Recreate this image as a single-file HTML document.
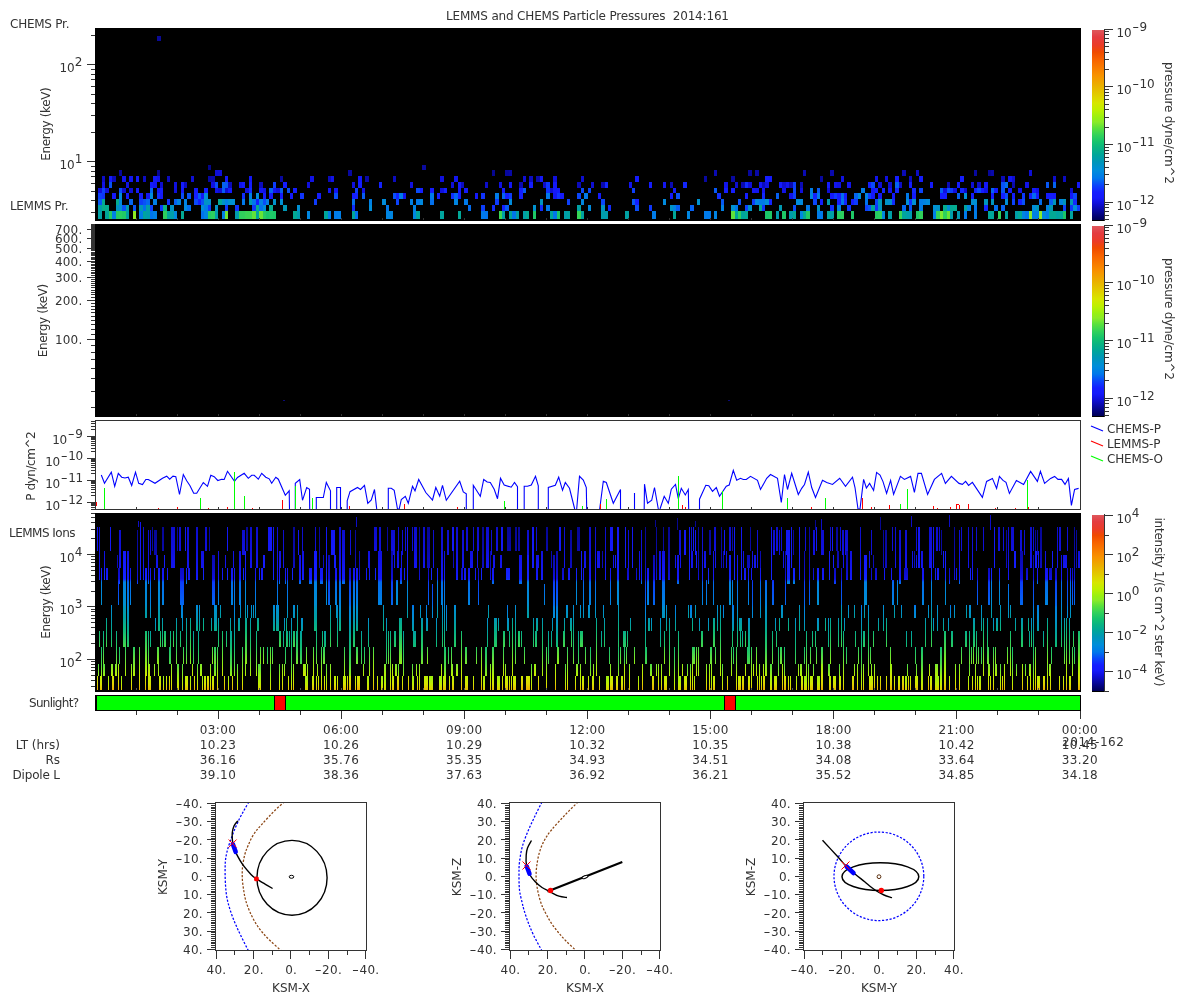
<!DOCTYPE html>
<html><head><meta charset="utf-8"><title>LEMMS and CHEMS Particle Pressures</title>
<style>html,body{margin:0;padding:0;background:#fff}svg{display:block;will-change:transform}text{font-family:'DejaVu Sans','Liberation Sans',sans-serif;font-size:12px;fill:#333}.fg{fill:#333}</style></head><body>
<svg width="1200" height="1000" viewBox="0 0 1200 1000">
<rect width="1200" height="1000" fill="#fff"/>
<defs>
<linearGradient id="cb1" gradientUnits="userSpaceOnUse" x1="0" y1="220" x2="0" y2="30"><stop offset="0.0000" stop-color="#000055"/><stop offset="0.0105" stop-color="#000064"/><stop offset="0.0370" stop-color="#05058c"/><stop offset="0.0630" stop-color="#0a0ab4"/><stop offset="0.0890" stop-color="#0f0fdc"/><stop offset="0.1160" stop-color="#1419fa"/><stop offset="0.1470" stop-color="#141eff"/><stop offset="0.1840" stop-color="#0a46fa"/><stop offset="0.2210" stop-color="#0078eb"/><stop offset="0.2630" stop-color="#008eda"/><stop offset="0.3050" stop-color="#0096b9"/><stop offset="0.3420" stop-color="#00a59b"/><stop offset="0.3790" stop-color="#0ab482"/><stop offset="0.4100" stop-color="#14c36e"/><stop offset="0.4470" stop-color="#32d25a"/><stop offset="0.4840" stop-color="#5ae13c"/><stop offset="0.5160" stop-color="#8ceb28"/><stop offset="0.5370" stop-color="#96f014"/><stop offset="0.5790" stop-color="#bef000"/><stop offset="0.6160" stop-color="#d7e600"/><stop offset="0.6580" stop-color="#e1cd00"/><stop offset="0.7100" stop-color="#ebaf00"/><stop offset="0.7630" stop-color="#f89100"/><stop offset="0.8420" stop-color="#f86400"/><stop offset="0.8840" stop-color="#f04b00"/><stop offset="0.9200" stop-color="#eb3c28"/><stop offset="0.9630" stop-color="#e43c41"/><stop offset="1.0000" stop-color="#de585c"/></linearGradient>
<linearGradient id="cb2" gradientUnits="userSpaceOnUse" x1="0" y1="416" x2="0" y2="226"><stop offset="0.0000" stop-color="#000055"/><stop offset="0.0105" stop-color="#000064"/><stop offset="0.0370" stop-color="#05058c"/><stop offset="0.0630" stop-color="#0a0ab4"/><stop offset="0.0890" stop-color="#0f0fdc"/><stop offset="0.1160" stop-color="#1419fa"/><stop offset="0.1470" stop-color="#141eff"/><stop offset="0.1840" stop-color="#0a46fa"/><stop offset="0.2210" stop-color="#0078eb"/><stop offset="0.2630" stop-color="#008eda"/><stop offset="0.3050" stop-color="#0096b9"/><stop offset="0.3420" stop-color="#00a59b"/><stop offset="0.3790" stop-color="#0ab482"/><stop offset="0.4100" stop-color="#14c36e"/><stop offset="0.4470" stop-color="#32d25a"/><stop offset="0.4840" stop-color="#5ae13c"/><stop offset="0.5160" stop-color="#8ceb28"/><stop offset="0.5370" stop-color="#96f014"/><stop offset="0.5790" stop-color="#bef000"/><stop offset="0.6160" stop-color="#d7e600"/><stop offset="0.6580" stop-color="#e1cd00"/><stop offset="0.7100" stop-color="#ebaf00"/><stop offset="0.7630" stop-color="#f89100"/><stop offset="0.8420" stop-color="#f86400"/><stop offset="0.8840" stop-color="#f04b00"/><stop offset="0.9200" stop-color="#eb3c28"/><stop offset="0.9630" stop-color="#e43c41"/><stop offset="1.0000" stop-color="#de585c"/></linearGradient>
<linearGradient id="cb3" gradientUnits="userSpaceOnUse" x1="0" y1="691" x2="0" y2="515"><stop offset="0.0000" stop-color="#000055"/><stop offset="0.0105" stop-color="#000064"/><stop offset="0.0370" stop-color="#05058c"/><stop offset="0.0630" stop-color="#0a0ab4"/><stop offset="0.0890" stop-color="#0f0fdc"/><stop offset="0.1160" stop-color="#1419fa"/><stop offset="0.1470" stop-color="#141eff"/><stop offset="0.1840" stop-color="#0a46fa"/><stop offset="0.2210" stop-color="#0078eb"/><stop offset="0.2630" stop-color="#008eda"/><stop offset="0.3050" stop-color="#0096b9"/><stop offset="0.3420" stop-color="#00a59b"/><stop offset="0.3790" stop-color="#0ab482"/><stop offset="0.4100" stop-color="#14c36e"/><stop offset="0.4470" stop-color="#32d25a"/><stop offset="0.4840" stop-color="#5ae13c"/><stop offset="0.5160" stop-color="#8ceb28"/><stop offset="0.5370" stop-color="#96f014"/><stop offset="0.5790" stop-color="#bef000"/><stop offset="0.6160" stop-color="#d7e600"/><stop offset="0.6580" stop-color="#e1cd00"/><stop offset="0.7100" stop-color="#ebaf00"/><stop offset="0.7630" stop-color="#f89100"/><stop offset="0.8420" stop-color="#f86400"/><stop offset="0.8840" stop-color="#f04b00"/><stop offset="0.9200" stop-color="#eb3c28"/><stop offset="0.9630" stop-color="#e43c41"/><stop offset="1.0000" stop-color="#de585c"/></linearGradient>
<linearGradient id="g4" gradientUnits="userSpaceOnUse" x1="0" y1="513" x2="0" y2="690"><stop offset="0.0000" stop-color="#0b0bbf"/><stop offset="0.0791" stop-color="#0d0dcb"/><stop offset="0.2147" stop-color="#1010df"/><stop offset="0.3107" stop-color="#1316f1"/><stop offset="0.3729" stop-color="#141afb"/><stop offset="0.3898" stop-color="#0369ef"/><stop offset="0.5198" stop-color="#0085e1"/><stop offset="0.5311" stop-color="#008fd4"/><stop offset="0.5932" stop-color="#0096b9"/><stop offset="0.6667" stop-color="#06ae8b"/><stop offset="0.7571" stop-color="#28cd60"/><stop offset="0.8531" stop-color="#7be82f"/><stop offset="0.9209" stop-color="#baf002"/><stop offset="0.9661" stop-color="#d8e400"/><stop offset="1.0000" stop-color="#e7bb00"/></linearGradient>
<linearGradient id="g4a" gradientUnits="userSpaceOnUse" x1="0" y1="513" x2="0" y2="690"><stop offset="0.0000" stop-color="#050589"/><stop offset="0.0791" stop-color="#060695"/><stop offset="0.2147" stop-color="#0909ab"/><stop offset="0.3107" stop-color="#0c0cc3"/><stop offset="0.3729" stop-color="#0f0fdd"/><stop offset="0.3898" stop-color="#0c3cfb"/><stop offset="0.5198" stop-color="#0369ef"/><stop offset="0.5311" stop-color="#007fe5"/><stop offset="0.5932" stop-color="#008fd4"/><stop offset="0.6667" stop-color="#00a0a5"/><stop offset="0.7571" stop-color="#11be74"/><stop offset="0.8531" stop-color="#4bdb47"/><stop offset="0.9209" stop-color="#99f013"/><stop offset="0.9661" stop-color="#c2ee00"/><stop offset="1.0000" stop-color="#e0cf00"/></linearGradient>
<linearGradient id="g4b" gradientUnits="userSpaceOnUse" x1="0" y1="513" x2="0" y2="690"><stop offset="0.0000" stop-color="#1113e8"/><stop offset="0.0791" stop-color="#1316f1"/><stop offset="0.2147" stop-color="#141afb"/><stop offset="0.3107" stop-color="#141dfe"/><stop offset="0.3729" stop-color="#1227fe"/><stop offset="0.3898" stop-color="#0082e3"/><stop offset="0.5198" stop-color="#0090d1"/><stop offset="0.5311" stop-color="#0095bd"/><stop offset="0.5932" stop-color="#00a2a1"/><stop offset="0.6667" stop-color="#0fbc78"/><stop offset="0.7571" stop-color="#45d94b"/><stop offset="0.8531" stop-color="#95f016"/><stop offset="0.9209" stop-color="#d0e900"/><stop offset="0.9661" stop-color="#dfd200"/><stop offset="1.0000" stop-color="#eda900"/></linearGradient>
</defs>
<g shape-rendering="crispEdges">
<rect x="95" y="28" width="986" height="193" fill="#000"/>
<rect x="98" y="211" width="4" height="8" fill="#00a1a3"/>
<rect x="98" y="205" width="4" height="6" fill="#009fa7"/>
<rect x="98" y="199" width="4" height="6" fill="#0658f5"/>
<rect x="98" y="193" width="4" height="6" fill="#0b40fb"/>
<rect x="98" y="188" width="4" height="5" fill="#0f0fdd"/>
<rect x="102" y="205" width="3" height="6" fill="#07af8a"/>
<rect x="102" y="199" width="3" height="6" fill="#03aa93"/>
<rect x="102" y="193" width="3" height="6" fill="#0e34fc"/>
<rect x="102" y="188" width="3" height="5" fill="#0a44fa"/>
<rect x="102" y="182" width="3" height="6" fill="#1112e5"/>
<rect x="102" y="176" width="3" height="6" fill="#0c0cc7"/>
<rect x="105" y="211" width="4" height="8" fill="#01a699"/>
<rect x="105" y="205" width="4" height="6" fill="#05ad8e"/>
<rect x="105" y="188" width="4" height="5" fill="#0f0fd9"/>
<rect x="109" y="211" width="3" height="8" fill="#21ca65"/>
<rect x="109" y="182" width="3" height="6" fill="#0852f6"/>
<rect x="109" y="176" width="3" height="6" fill="#141cfd"/>
<rect x="112" y="211" width="4" height="8" fill="#0081e4"/>
<rect x="112" y="193" width="4" height="6" fill="#1419f9"/>
<rect x="112" y="176" width="4" height="6" fill="#0a0ab7"/>
<rect x="116" y="211" width="3" height="8" fill="#24cb63"/>
<rect x="116" y="205" width="3" height="6" fill="#0094c1"/>
<rect x="116" y="199" width="3" height="6" fill="#04ac90"/>
<rect x="119" y="211" width="3" height="8" fill="#29ce60"/>
<rect x="119" y="205" width="3" height="6" fill="#0090d3"/>
<rect x="119" y="199" width="3" height="6" fill="#0089de"/>
<rect x="119" y="193" width="3" height="6" fill="#008cdc"/>
<rect x="119" y="188" width="3" height="5" fill="#0851f7"/>
<rect x="119" y="170" width="3" height="6" fill="#060697"/>
<rect x="122" y="211" width="4" height="8" fill="#21ca65"/>
<rect x="122" y="205" width="4" height="6" fill="#0852f6"/>
<rect x="122" y="188" width="4" height="5" fill="#0d0dce"/>
<rect x="122" y="176" width="4" height="6" fill="#1215ef"/>
<rect x="126" y="211" width="3" height="8" fill="#00a2a1"/>
<rect x="126" y="205" width="3" height="6" fill="#009baf"/>
<rect x="126" y="193" width="3" height="6" fill="#141afb"/>
<rect x="126" y="182" width="3" height="6" fill="#1012e4"/>
<rect x="129" y="199" width="4" height="6" fill="#0465f1"/>
<rect x="129" y="188" width="4" height="5" fill="#0e0ed5"/>
<rect x="129" y="176" width="4" height="6" fill="#1216f1"/>
<rect x="133" y="211" width="3" height="8" fill="#8eec23"/>
<rect x="133" y="205" width="3" height="6" fill="#0753f6"/>
<rect x="136" y="188" width="3" height="5" fill="#141afb"/>
<rect x="136" y="176" width="3" height="6" fill="#141afb"/>
<rect x="139" y="211" width="4" height="8" fill="#007ee6"/>
<rect x="139" y="205" width="4" height="6" fill="#0096bb"/>
<rect x="139" y="199" width="4" height="6" fill="#0c3efb"/>
<rect x="139" y="193" width="4" height="6" fill="#141dfe"/>
<rect x="143" y="211" width="3" height="8" fill="#00a49d"/>
<rect x="143" y="205" width="3" height="6" fill="#0171ed"/>
<rect x="143" y="199" width="3" height="6" fill="#0852f6"/>
<rect x="143" y="176" width="3" height="6" fill="#0c0cc1"/>
<rect x="146" y="211" width="4" height="8" fill="#009dab"/>
<rect x="146" y="205" width="4" height="6" fill="#009ea9"/>
<rect x="146" y="199" width="4" height="6" fill="#0368f0"/>
<rect x="146" y="193" width="4" height="6" fill="#1316f2"/>
<rect x="150" y="211" width="3" height="8" fill="#0175ec"/>
<rect x="150" y="205" width="3" height="6" fill="#0c3ffb"/>
<rect x="150" y="193" width="3" height="6" fill="#008ed9"/>
<rect x="150" y="188" width="3" height="5" fill="#0369f0"/>
<rect x="150" y="182" width="3" height="6" fill="#141bfc"/>
<rect x="153" y="211" width="4" height="8" fill="#0080e5"/>
<rect x="153" y="199" width="4" height="6" fill="#007fe6"/>
<rect x="153" y="182" width="4" height="6" fill="#1316f2"/>
<rect x="153" y="176" width="4" height="6" fill="#1318f7"/>
<rect x="157" y="193" width="3" height="6" fill="#102efd"/>
<rect x="157" y="188" width="3" height="5" fill="#1418f7"/>
<rect x="157" y="176" width="3" height="6" fill="#1113e9"/>
<rect x="157" y="170" width="3" height="6" fill="#060695"/>
<rect x="160" y="205" width="3" height="6" fill="#0d39fc"/>
<rect x="160" y="193" width="3" height="6" fill="#141afb"/>
<rect x="160" y="188" width="3" height="5" fill="#141dfe"/>
<rect x="160" y="182" width="3" height="6" fill="#0d0dcf"/>
<rect x="163" y="211" width="4" height="8" fill="#2dcf5d"/>
<rect x="163" y="205" width="4" height="6" fill="#0ab483"/>
<rect x="167" y="211" width="3" height="8" fill="#01a699"/>
<rect x="167" y="199" width="3" height="6" fill="#0f31fd"/>
<rect x="167" y="176" width="3" height="6" fill="#0b0bbc"/>
<rect x="170" y="211" width="4" height="8" fill="#009eaa"/>
<rect x="170" y="205" width="4" height="6" fill="#0093c5"/>
<rect x="174" y="211" width="3" height="8" fill="#0088df"/>
<rect x="174" y="199" width="3" height="6" fill="#0561f2"/>
<rect x="174" y="188" width="3" height="5" fill="#0f0fdb"/>
<rect x="174" y="182" width="3" height="6" fill="#1010df"/>
<rect x="177" y="199" width="4" height="6" fill="#0084e2"/>
<rect x="181" y="211" width="3" height="8" fill="#03a994"/>
<rect x="181" y="193" width="3" height="6" fill="#084ef7"/>
<rect x="181" y="188" width="3" height="5" fill="#141bfc"/>
<rect x="181" y="182" width="3" height="6" fill="#141cfd"/>
<rect x="184" y="205" width="3" height="6" fill="#008add"/>
<rect x="184" y="199" width="3" height="6" fill="#0083e3"/>
<rect x="184" y="182" width="3" height="6" fill="#0b0bbf"/>
<rect x="187" y="205" width="4" height="6" fill="#0270ed"/>
<rect x="187" y="193" width="4" height="6" fill="#0754f6"/>
<rect x="191" y="176" width="3" height="6" fill="#0e0ed5"/>
<rect x="194" y="199" width="4" height="6" fill="#0949f9"/>
<rect x="194" y="193" width="4" height="6" fill="#141fff"/>
<rect x="194" y="188" width="4" height="5" fill="#141afb"/>
<rect x="198" y="199" width="3" height="6" fill="#141dfe"/>
<rect x="198" y="193" width="3" height="6" fill="#055df3"/>
<rect x="201" y="211" width="3" height="8" fill="#0172ed"/>
<rect x="201" y="205" width="3" height="6" fill="#008ed8"/>
<rect x="201" y="199" width="3" height="6" fill="#0852f6"/>
<rect x="201" y="193" width="3" height="6" fill="#1317f5"/>
<rect x="204" y="211" width="4" height="8" fill="#0086e1"/>
<rect x="204" y="205" width="4" height="6" fill="#007ce8"/>
<rect x="204" y="199" width="4" height="6" fill="#0093c4"/>
<rect x="204" y="193" width="4" height="6" fill="#008ed9"/>
<rect x="204" y="188" width="4" height="5" fill="#141eff"/>
<rect x="208" y="211" width="3" height="8" fill="#24cb63"/>
<rect x="208" y="205" width="3" height="6" fill="#0d3bfb"/>
<rect x="208" y="199" width="3" height="6" fill="#0091ce"/>
<rect x="208" y="176" width="3" height="6" fill="#0808a4"/>
<rect x="208" y="165" width="3" height="5" fill="#05058c"/>
<rect x="211" y="211" width="4" height="8" fill="#2dcf5e"/>
<rect x="211" y="182" width="4" height="6" fill="#1011e1"/>
<rect x="211" y="176" width="4" height="6" fill="#0909aa"/>
<rect x="215" y="211" width="3" height="8" fill="#009ea9"/>
<rect x="215" y="205" width="3" height="6" fill="#0093c6"/>
<rect x="215" y="188" width="3" height="5" fill="#1112e6"/>
<rect x="215" y="182" width="3" height="6" fill="#094df8"/>
<rect x="215" y="170" width="3" height="6" fill="#0e0ed7"/>
<rect x="218" y="199" width="4" height="6" fill="#02a895"/>
<rect x="218" y="188" width="4" height="5" fill="#0e0ed1"/>
<rect x="218" y="170" width="4" height="6" fill="#0f0fd9"/>
<rect x="222" y="211" width="3" height="8" fill="#0080e5"/>
<rect x="222" y="199" width="3" height="6" fill="#0093c6"/>
<rect x="222" y="188" width="3" height="5" fill="#065bf4"/>
<rect x="222" y="182" width="3" height="6" fill="#0463f1"/>
<rect x="225" y="211" width="3" height="8" fill="#70e533"/>
<rect x="225" y="205" width="3" height="6" fill="#0e37fc"/>
<rect x="225" y="199" width="3" height="6" fill="#0081e4"/>
<rect x="225" y="188" width="3" height="5" fill="#0d0dd0"/>
<rect x="225" y="182" width="3" height="6" fill="#065af4"/>
<rect x="225" y="176" width="3" height="6" fill="#1419fa"/>
<rect x="228" y="199" width="4" height="6" fill="#0091cf"/>
<rect x="228" y="188" width="4" height="5" fill="#141bfc"/>
<rect x="228" y="182" width="4" height="6" fill="#0b0bbb"/>
<rect x="232" y="199" width="3" height="6" fill="#008fd8"/>
<rect x="235" y="211" width="4" height="8" fill="#009cad"/>
<rect x="235" y="205" width="4" height="6" fill="#0f31fd"/>
<rect x="239" y="211" width="3" height="8" fill="#2fd15c"/>
<rect x="239" y="182" width="3" height="6" fill="#1114eb"/>
<rect x="242" y="211" width="3" height="8" fill="#31d15b"/>
<rect x="242" y="199" width="3" height="6" fill="#0079ea"/>
<rect x="242" y="193" width="3" height="6" fill="#102efd"/>
<rect x="242" y="182" width="3" height="6" fill="#141afb"/>
<rect x="245" y="211" width="4" height="8" fill="#3ad554"/>
<rect x="245" y="188" width="4" height="5" fill="#0f10de"/>
<rect x="249" y="211" width="3" height="8" fill="#3bd554"/>
<rect x="249" y="199" width="3" height="6" fill="#0098b4"/>
<rect x="249" y="193" width="3" height="6" fill="#007fe5"/>
<rect x="249" y="188" width="3" height="5" fill="#102efd"/>
<rect x="249" y="182" width="3" height="6" fill="#141eff"/>
<rect x="249" y="176" width="3" height="6" fill="#1317f5"/>
<rect x="252" y="211" width="4" height="8" fill="#60e23a"/>
<rect x="252" y="205" width="4" height="6" fill="#0e35fc"/>
<rect x="252" y="199" width="4" height="6" fill="#0076ec"/>
<rect x="256" y="211" width="3" height="8" fill="#00a59b"/>
<rect x="256" y="205" width="3" height="6" fill="#05ac8f"/>
<rect x="256" y="199" width="3" height="6" fill="#141dfe"/>
<rect x="256" y="193" width="3" height="6" fill="#008ddb"/>
<rect x="259" y="211" width="4" height="8" fill="#68e436"/>
<rect x="259" y="205" width="4" height="6" fill="#0173ec"/>
<rect x="259" y="199" width="4" height="6" fill="#0082e3"/>
<rect x="259" y="188" width="4" height="5" fill="#1216f0"/>
<rect x="259" y="182" width="4" height="6" fill="#0b0bbe"/>
<rect x="263" y="211" width="3" height="8" fill="#27cc61"/>
<rect x="263" y="205" width="3" height="6" fill="#008eda"/>
<rect x="263" y="199" width="3" height="6" fill="#094df8"/>
<rect x="263" y="193" width="3" height="6" fill="#141bfc"/>
<rect x="263" y="188" width="3" height="5" fill="#1012e4"/>
<rect x="266" y="211" width="3" height="8" fill="#1ac66a"/>
<rect x="266" y="199" width="3" height="6" fill="#0080e5"/>
<rect x="269" y="211" width="4" height="8" fill="#1fc967"/>
<rect x="269" y="205" width="4" height="6" fill="#05ad8e"/>
<rect x="269" y="193" width="4" height="6" fill="#141cfd"/>
<rect x="269" y="188" width="4" height="5" fill="#0463f1"/>
<rect x="273" y="211" width="3" height="8" fill="#1cc768"/>
<rect x="273" y="199" width="3" height="6" fill="#0092c9"/>
<rect x="273" y="188" width="3" height="5" fill="#1216f0"/>
<rect x="273" y="182" width="3" height="6" fill="#0c3cfb"/>
<rect x="276" y="188" width="4" height="5" fill="#0f0fd9"/>
<rect x="280" y="199" width="3" height="6" fill="#0090d3"/>
<rect x="280" y="193" width="3" height="6" fill="#141dfe"/>
<rect x="280" y="188" width="3" height="5" fill="#055ef3"/>
<rect x="280" y="176" width="3" height="6" fill="#0808a1"/>
<rect x="283" y="205" width="4" height="6" fill="#0098b6"/>
<rect x="283" y="182" width="4" height="6" fill="#141cfd"/>
<rect x="287" y="188" width="3" height="5" fill="#0850f7"/>
<rect x="290" y="193" width="3" height="6" fill="#141afb"/>
<rect x="293" y="211" width="4" height="8" fill="#03a994"/>
<rect x="293" y="188" width="4" height="5" fill="#141cfd"/>
<rect x="297" y="211" width="3" height="8" fill="#009cad"/>
<rect x="297" y="205" width="3" height="6" fill="#0090d3"/>
<rect x="300" y="193" width="4" height="6" fill="#0f34fc"/>
<rect x="307" y="211" width="3" height="8" fill="#0086e0"/>
<rect x="307" y="182" width="3" height="6" fill="#0f0fdd"/>
<rect x="310" y="176" width="4" height="6" fill="#1012e5"/>
<rect x="314" y="199" width="3" height="6" fill="#0d3bfb"/>
<rect x="317" y="193" width="4" height="6" fill="#141dfe"/>
<rect x="324" y="211" width="4" height="8" fill="#00a69a"/>
<rect x="328" y="211" width="3" height="8" fill="#007ee7"/>
<rect x="328" y="188" width="3" height="5" fill="#1216f0"/>
<rect x="328" y="176" width="3" height="6" fill="#0b0bb9"/>
<rect x="331" y="176" width="3" height="6" fill="#1113e8"/>
<rect x="334" y="211" width="4" height="8" fill="#007be8"/>
<rect x="334" y="193" width="4" height="6" fill="#094df8"/>
<rect x="334" y="188" width="4" height="5" fill="#1316f2"/>
<rect x="338" y="211" width="3" height="8" fill="#007ee7"/>
<rect x="348" y="170" width="4" height="6" fill="#0808a2"/>
<rect x="352" y="211" width="3" height="8" fill="#01a699"/>
<rect x="352" y="205" width="3" height="6" fill="#112bfd"/>
<rect x="352" y="199" width="3" height="6" fill="#026eee"/>
<rect x="352" y="193" width="3" height="6" fill="#141cfd"/>
<rect x="352" y="182" width="3" height="6" fill="#0f10de"/>
<rect x="355" y="211" width="3" height="8" fill="#0174ec"/>
<rect x="355" y="193" width="3" height="6" fill="#1322fe"/>
<rect x="355" y="188" width="3" height="5" fill="#0d3cfb"/>
<rect x="358" y="182" width="4" height="6" fill="#141eff"/>
<rect x="358" y="176" width="4" height="6" fill="#1419fa"/>
<rect x="362" y="193" width="3" height="6" fill="#065cf3"/>
<rect x="362" y="188" width="3" height="5" fill="#1012e5"/>
<rect x="365" y="176" width="4" height="6" fill="#0808a5"/>
<rect x="369" y="205" width="3" height="6" fill="#008eda"/>
<rect x="369" y="199" width="3" height="6" fill="#0080e5"/>
<rect x="379" y="182" width="3" height="6" fill="#1322fe"/>
<rect x="382" y="199" width="4" height="6" fill="#008cdb"/>
<rect x="386" y="211" width="3" height="8" fill="#0085e1"/>
<rect x="386" y="205" width="3" height="6" fill="#0078eb"/>
<rect x="389" y="211" width="4" height="8" fill="#0085e1"/>
<rect x="393" y="193" width="3" height="6" fill="#0851f7"/>
<rect x="393" y="176" width="3" height="6" fill="#0b0bbf"/>
<rect x="396" y="199" width="3" height="6" fill="#0b42fb"/>
<rect x="396" y="193" width="3" height="6" fill="#1323fe"/>
<rect x="399" y="193" width="4" height="6" fill="#007ce8"/>
<rect x="403" y="193" width="3" height="6" fill="#1113e9"/>
<rect x="410" y="199" width="3" height="6" fill="#007fe6"/>
<rect x="410" y="182" width="3" height="6" fill="#1011e1"/>
<rect x="413" y="211" width="3" height="8" fill="#0086e0"/>
<rect x="413" y="205" width="3" height="6" fill="#0081e4"/>
<rect x="416" y="211" width="4" height="8" fill="#00a39f"/>
<rect x="416" y="199" width="4" height="6" fill="#0079ea"/>
<rect x="416" y="188" width="4" height="5" fill="#094bf9"/>
<rect x="420" y="199" width="3" height="6" fill="#0088de"/>
<rect x="420" y="188" width="3" height="5" fill="#141fff"/>
<rect x="430" y="199" width="4" height="6" fill="#0270ed"/>
<rect x="430" y="193" width="4" height="6" fill="#007be9"/>
<rect x="430" y="188" width="4" height="5" fill="#141cfd"/>
<rect x="437" y="193" width="3" height="6" fill="#141dfe"/>
<rect x="440" y="211" width="4" height="8" fill="#00a49e"/>
<rect x="440" y="188" width="4" height="5" fill="#0f10de"/>
<rect x="440" y="176" width="4" height="6" fill="#0f10df"/>
<rect x="444" y="188" width="3" height="5" fill="#1321ff"/>
<rect x="451" y="193" width="3" height="6" fill="#1030fd"/>
<rect x="451" y="182" width="3" height="6" fill="#0e0ed7"/>
<rect x="454" y="199" width="4" height="6" fill="#0085e1"/>
<rect x="454" y="193" width="4" height="6" fill="#0465f1"/>
<rect x="454" y="176" width="4" height="6" fill="#1215ef"/>
<rect x="458" y="211" width="3" height="8" fill="#02a797"/>
<rect x="458" y="193" width="3" height="6" fill="#141cfd"/>
<rect x="458" y="188" width="3" height="5" fill="#1419fa"/>
<rect x="458" y="182" width="3" height="6" fill="#141cfd"/>
<rect x="461" y="182" width="3" height="6" fill="#0c0cc1"/>
<rect x="464" y="199" width="4" height="6" fill="#007aea"/>
<rect x="464" y="188" width="4" height="5" fill="#1419f9"/>
<rect x="468" y="205" width="3" height="6" fill="#026cef"/>
<rect x="475" y="193" width="3" height="6" fill="#1419f9"/>
<rect x="481" y="211" width="4" height="8" fill="#0078eb"/>
<rect x="481" y="205" width="4" height="6" fill="#0c3efb"/>
<rect x="481" y="193" width="4" height="6" fill="#0f32fd"/>
<rect x="485" y="211" width="3" height="8" fill="#0174ec"/>
<rect x="485" y="182" width="3" height="6" fill="#0d0dca"/>
<rect x="492" y="205" width="3" height="6" fill="#112bfd"/>
<rect x="492" y="170" width="3" height="6" fill="#060692"/>
<rect x="495" y="199" width="4" height="6" fill="#0d3bfb"/>
<rect x="495" y="193" width="4" height="6" fill="#007be9"/>
<rect x="499" y="211" width="3" height="8" fill="#3ad554"/>
<rect x="499" y="182" width="3" height="6" fill="#1011e2"/>
<rect x="502" y="211" width="3" height="8" fill="#00a0a4"/>
<rect x="502" y="205" width="3" height="6" fill="#1321ff"/>
<rect x="502" y="193" width="3" height="6" fill="#0464f1"/>
<rect x="502" y="188" width="3" height="5" fill="#141bfc"/>
<rect x="505" y="205" width="4" height="6" fill="#065cf3"/>
<rect x="505" y="193" width="4" height="6" fill="#141eff"/>
<rect x="505" y="170" width="4" height="6" fill="#07079f"/>
<rect x="509" y="211" width="3" height="8" fill="#00a39e"/>
<rect x="509" y="199" width="3" height="6" fill="#008bdc"/>
<rect x="509" y="193" width="3" height="6" fill="#0d3bfb"/>
<rect x="509" y="182" width="3" height="6" fill="#1318f7"/>
<rect x="509" y="170" width="3" height="6" fill="#0808a7"/>
<rect x="512" y="211" width="4" height="8" fill="#0076ec"/>
<rect x="516" y="211" width="3" height="8" fill="#009ea8"/>
<rect x="519" y="193" width="4" height="6" fill="#141fff"/>
<rect x="519" y="188" width="4" height="5" fill="#141cfd"/>
<rect x="519" y="182" width="4" height="6" fill="#0a0ab5"/>
<rect x="523" y="211" width="3" height="8" fill="#009fa6"/>
<rect x="523" y="188" width="3" height="5" fill="#0658f5"/>
<rect x="523" y="176" width="3" height="6" fill="#0e0ed3"/>
<rect x="526" y="211" width="3" height="8" fill="#03aa93"/>
<rect x="529" y="182" width="4" height="6" fill="#141dfe"/>
<rect x="529" y="176" width="4" height="6" fill="#0c0cc3"/>
<rect x="533" y="211" width="3" height="8" fill="#1ec868"/>
<rect x="533" y="205" width="3" height="6" fill="#0091ce"/>
<rect x="536" y="176" width="4" height="6" fill="#0909ab"/>
<rect x="540" y="205" width="3" height="6" fill="#102cfd"/>
<rect x="540" y="199" width="3" height="6" fill="#0094c1"/>
<rect x="540" y="176" width="3" height="6" fill="#1418f8"/>
<rect x="543" y="182" width="3" height="6" fill="#0d0dcb"/>
<rect x="546" y="205" width="4" height="6" fill="#0078eb"/>
<rect x="546" y="193" width="4" height="6" fill="#007aea"/>
<rect x="546" y="188" width="4" height="5" fill="#0f33fc"/>
<rect x="546" y="182" width="4" height="6" fill="#0e36fc"/>
<rect x="550" y="211" width="3" height="8" fill="#00a59b"/>
<rect x="550" y="188" width="3" height="5" fill="#0e0ed1"/>
<rect x="553" y="211" width="4" height="8" fill="#0077eb"/>
<rect x="553" y="193" width="4" height="6" fill="#1316f2"/>
<rect x="553" y="188" width="4" height="5" fill="#1419f9"/>
<rect x="553" y="182" width="4" height="6" fill="#1419fa"/>
<rect x="553" y="176" width="4" height="6" fill="#0f0fdb"/>
<rect x="557" y="211" width="3" height="8" fill="#1ac66a"/>
<rect x="557" y="193" width="3" height="6" fill="#0f34fc"/>
<rect x="557" y="188" width="3" height="5" fill="#141bfc"/>
<rect x="560" y="193" width="4" height="6" fill="#141afb"/>
<rect x="564" y="211" width="3" height="8" fill="#009dab"/>
<rect x="567" y="211" width="3" height="8" fill="#00a2a1"/>
<rect x="567" y="199" width="3" height="6" fill="#0c40fb"/>
<rect x="577" y="211" width="4" height="8" fill="#36d457"/>
<rect x="577" y="205" width="4" height="6" fill="#00a1a3"/>
<rect x="577" y="193" width="4" height="6" fill="#0a45fa"/>
<rect x="577" y="182" width="4" height="6" fill="#0b0bbc"/>
<rect x="581" y="211" width="3" height="8" fill="#00a39f"/>
<rect x="581" y="199" width="3" height="6" fill="#0087df"/>
<rect x="581" y="188" width="3" height="5" fill="#0a48f9"/>
<rect x="581" y="176" width="3" height="6" fill="#0d0dd0"/>
<rect x="584" y="193" width="4" height="6" fill="#0079ea"/>
<rect x="588" y="205" width="3" height="6" fill="#0089de"/>
<rect x="588" y="188" width="3" height="5" fill="#0a44fa"/>
<rect x="591" y="182" width="3" height="6" fill="#0e0ed4"/>
<rect x="598" y="193" width="3" height="6" fill="#141bfc"/>
<rect x="601" y="211" width="4" height="8" fill="#009cac"/>
<rect x="601" y="205" width="4" height="6" fill="#0093c5"/>
<rect x="601" y="199" width="4" height="6" fill="#0a46fa"/>
<rect x="601" y="182" width="4" height="6" fill="#0909b0"/>
<rect x="605" y="211" width="3" height="8" fill="#009bae"/>
<rect x="605" y="182" width="3" height="6" fill="#1227fe"/>
<rect x="608" y="205" width="3" height="6" fill="#112bfd"/>
<rect x="625" y="211" width="4" height="8" fill="#00a1a3"/>
<rect x="629" y="182" width="3" height="6" fill="#1215ef"/>
<rect x="632" y="199" width="3" height="6" fill="#065bf4"/>
<rect x="632" y="188" width="3" height="5" fill="#0c3efb"/>
<rect x="635" y="205" width="4" height="6" fill="#094df8"/>
<rect x="635" y="199" width="4" height="6" fill="#141eff"/>
<rect x="635" y="176" width="4" height="6" fill="#141afb"/>
<rect x="649" y="205" width="3" height="6" fill="#0e37fc"/>
<rect x="649" y="182" width="3" height="6" fill="#141cfd"/>
<rect x="652" y="211" width="4" height="8" fill="#007be9"/>
<rect x="663" y="199" width="3" height="6" fill="#008add"/>
<rect x="663" y="182" width="3" height="6" fill="#1316f1"/>
<rect x="670" y="205" width="3" height="6" fill="#0093c5"/>
<rect x="670" y="193" width="3" height="6" fill="#141afb"/>
<rect x="670" y="182" width="3" height="6" fill="#0a0ab4"/>
<rect x="673" y="211" width="3" height="8" fill="#01a699"/>
<rect x="673" y="205" width="3" height="6" fill="#0084e1"/>
<rect x="673" y="188" width="3" height="5" fill="#141afb"/>
<rect x="676" y="205" width="4" height="6" fill="#065cf4"/>
<rect x="676" y="193" width="4" height="6" fill="#0851f7"/>
<rect x="683" y="182" width="4" height="6" fill="#1225fe"/>
<rect x="687" y="211" width="3" height="8" fill="#0086e0"/>
<rect x="690" y="205" width="4" height="6" fill="#0561f2"/>
<rect x="697" y="199" width="3" height="6" fill="#0091ce"/>
<rect x="704" y="211" width="3" height="8" fill="#007be9"/>
<rect x="704" y="176" width="3" height="6" fill="#0808a1"/>
<rect x="707" y="211" width="4" height="8" fill="#007aea"/>
<rect x="714" y="211" width="3" height="8" fill="#0083e2"/>
<rect x="714" y="188" width="3" height="5" fill="#0658f5"/>
<rect x="714" y="170" width="3" height="6" fill="#0a0ab3"/>
<rect x="717" y="193" width="4" height="6" fill="#102ffd"/>
<rect x="721" y="205" width="3" height="6" fill="#007fe6"/>
<rect x="721" y="199" width="3" height="6" fill="#0659f4"/>
<rect x="724" y="188" width="4" height="5" fill="#141dfe"/>
<rect x="724" y="182" width="4" height="6" fill="#1214ec"/>
<rect x="731" y="211" width="4" height="8" fill="#60e23a"/>
<rect x="731" y="205" width="4" height="6" fill="#0091cf"/>
<rect x="731" y="188" width="4" height="5" fill="#141dfe"/>
<rect x="731" y="176" width="4" height="6" fill="#0808a0"/>
<rect x="735" y="211" width="3" height="8" fill="#01a699"/>
<rect x="735" y="205" width="3" height="6" fill="#0077eb"/>
<rect x="735" y="182" width="3" height="6" fill="#0d0dcc"/>
<rect x="738" y="211" width="3" height="8" fill="#2bcf5f"/>
<rect x="738" y="199" width="3" height="6" fill="#084ef8"/>
<rect x="741" y="211" width="4" height="8" fill="#00a59c"/>
<rect x="741" y="182" width="4" height="6" fill="#0a0ab1"/>
<rect x="745" y="211" width="3" height="8" fill="#03a994"/>
<rect x="745" y="205" width="3" height="6" fill="#0b40fb"/>
<rect x="745" y="193" width="3" height="6" fill="#141eff"/>
<rect x="745" y="182" width="3" height="6" fill="#102dfd"/>
<rect x="748" y="205" width="4" height="6" fill="#0093c4"/>
<rect x="748" y="182" width="4" height="6" fill="#0f0fdb"/>
<rect x="748" y="170" width="4" height="6" fill="#07079d"/>
<rect x="752" y="199" width="3" height="6" fill="#0c3dfb"/>
<rect x="752" y="188" width="3" height="5" fill="#1317f3"/>
<rect x="755" y="199" width="4" height="6" fill="#0086e0"/>
<rect x="755" y="188" width="4" height="5" fill="#1215ef"/>
<rect x="755" y="170" width="4" height="6" fill="#0808a6"/>
<rect x="759" y="205" width="3" height="6" fill="#02a896"/>
<rect x="759" y="199" width="3" height="6" fill="#007ce8"/>
<rect x="759" y="182" width="3" height="6" fill="#1418f7"/>
<rect x="762" y="205" width="3" height="6" fill="#0e37fc"/>
<rect x="762" y="199" width="3" height="6" fill="#007be8"/>
<rect x="762" y="193" width="3" height="6" fill="#1128fe"/>
<rect x="762" y="188" width="3" height="5" fill="#1316f2"/>
<rect x="762" y="182" width="3" height="6" fill="#0b0bbd"/>
<rect x="765" y="211" width="4" height="8" fill="#1ac66a"/>
<rect x="765" y="199" width="4" height="6" fill="#008ed9"/>
<rect x="765" y="182" width="4" height="6" fill="#1012e4"/>
<rect x="765" y="176" width="4" height="6" fill="#141dfe"/>
<rect x="769" y="211" width="3" height="8" fill="#1fc867"/>
<rect x="769" y="199" width="3" height="6" fill="#1324fe"/>
<rect x="769" y="176" width="3" height="6" fill="#141afb"/>
<rect x="776" y="211" width="3" height="8" fill="#009cad"/>
<rect x="776" y="193" width="3" height="6" fill="#055ff3"/>
<rect x="779" y="205" width="3" height="6" fill="#0099b2"/>
<rect x="779" y="182" width="3" height="6" fill="#141dfe"/>
<rect x="782" y="211" width="4" height="8" fill="#1ec867"/>
<rect x="782" y="188" width="4" height="5" fill="#1112e5"/>
<rect x="782" y="182" width="4" height="6" fill="#0e0ed3"/>
<rect x="786" y="182" width="3" height="6" fill="#1215ef"/>
<rect x="789" y="211" width="4" height="8" fill="#009daa"/>
<rect x="789" y="193" width="4" height="6" fill="#1114eb"/>
<rect x="789" y="182" width="4" height="6" fill="#0a0ab2"/>
<rect x="793" y="211" width="3" height="8" fill="#02a896"/>
<rect x="793" y="205" width="3" height="6" fill="#094af9"/>
<rect x="793" y="193" width="3" height="6" fill="#0c3ffb"/>
<rect x="793" y="188" width="3" height="5" fill="#0b43fa"/>
<rect x="793" y="182" width="3" height="6" fill="#0c3dfb"/>
<rect x="796" y="199" width="4" height="6" fill="#008cdc"/>
<rect x="800" y="211" width="3" height="8" fill="#0086e0"/>
<rect x="800" y="199" width="3" height="6" fill="#0089de"/>
<rect x="800" y="188" width="3" height="5" fill="#0f0fdd"/>
<rect x="800" y="182" width="3" height="6" fill="#0b0bb8"/>
<rect x="803" y="211" width="3" height="8" fill="#02a995"/>
<rect x="803" y="170" width="3" height="6" fill="#0a0ab2"/>
<rect x="806" y="211" width="4" height="8" fill="#21c966"/>
<rect x="806" y="205" width="4" height="6" fill="#0079ea"/>
<rect x="810" y="193" width="3" height="6" fill="#0086e0"/>
<rect x="810" y="188" width="3" height="5" fill="#007ee7"/>
<rect x="813" y="199" width="4" height="6" fill="#0a47fa"/>
<rect x="813" y="193" width="4" height="6" fill="#1322fe"/>
<rect x="817" y="211" width="3" height="8" fill="#007ce8"/>
<rect x="817" y="205" width="3" height="6" fill="#0093c5"/>
<rect x="817" y="193" width="3" height="6" fill="#007ce8"/>
<rect x="817" y="188" width="3" height="5" fill="#065bf4"/>
<rect x="820" y="211" width="3" height="8" fill="#0079ea"/>
<rect x="820" y="199" width="3" height="6" fill="#141eff"/>
<rect x="820" y="176" width="3" height="6" fill="#0808a0"/>
<rect x="827" y="211" width="3" height="8" fill="#00a59c"/>
<rect x="827" y="199" width="3" height="6" fill="#009cac"/>
<rect x="827" y="188" width="3" height="5" fill="#0e0ed4"/>
<rect x="827" y="182" width="3" height="6" fill="#141cfd"/>
<rect x="830" y="211" width="4" height="8" fill="#009fa7"/>
<rect x="830" y="205" width="4" height="6" fill="#102efd"/>
<rect x="830" y="193" width="4" height="6" fill="#1419fa"/>
<rect x="830" y="170" width="4" height="6" fill="#0909ae"/>
<rect x="834" y="193" width="3" height="6" fill="#0d39fc"/>
<rect x="834" y="182" width="3" height="6" fill="#1215ee"/>
<rect x="837" y="211" width="4" height="8" fill="#27cd61"/>
<rect x="837" y="205" width="4" height="6" fill="#007ee7"/>
<rect x="837" y="199" width="4" height="6" fill="#141eff"/>
<rect x="837" y="193" width="4" height="6" fill="#141dfe"/>
<rect x="837" y="182" width="4" height="6" fill="#1012e5"/>
<rect x="841" y="211" width="3" height="8" fill="#2ccf5e"/>
<rect x="841" y="199" width="3" height="6" fill="#007aea"/>
<rect x="841" y="193" width="3" height="6" fill="#026eee"/>
<rect x="841" y="176" width="3" height="6" fill="#1011e3"/>
<rect x="844" y="199" width="3" height="6" fill="#1225fe"/>
<rect x="844" y="193" width="3" height="6" fill="#141bfc"/>
<rect x="847" y="205" width="4" height="6" fill="#0e37fc"/>
<rect x="847" y="182" width="4" height="6" fill="#1214ec"/>
<rect x="851" y="211" width="3" height="8" fill="#1fc867"/>
<rect x="851" y="199" width="3" height="6" fill="#141dfe"/>
<rect x="854" y="199" width="4" height="6" fill="#0c3cfb"/>
<rect x="854" y="193" width="4" height="6" fill="#0465f1"/>
<rect x="858" y="193" width="3" height="6" fill="#008eda"/>
<rect x="861" y="188" width="4" height="5" fill="#007ce8"/>
<rect x="865" y="205" width="3" height="6" fill="#0c3ffb"/>
<rect x="865" y="199" width="3" height="6" fill="#0173ec"/>
<rect x="865" y="193" width="3" height="6" fill="#0083e2"/>
<rect x="868" y="205" width="3" height="6" fill="#0757f5"/>
<rect x="868" y="193" width="3" height="6" fill="#0d3cfb"/>
<rect x="868" y="182" width="3" height="6" fill="#141dfe"/>
<rect x="871" y="205" width="4" height="6" fill="#02a797"/>
<rect x="871" y="193" width="4" height="6" fill="#1419fa"/>
<rect x="871" y="188" width="4" height="5" fill="#1318f6"/>
<rect x="871" y="182" width="4" height="6" fill="#094af9"/>
<rect x="875" y="211" width="3" height="8" fill="#25cc63"/>
<rect x="875" y="205" width="3" height="6" fill="#0f32fd"/>
<rect x="875" y="199" width="3" height="6" fill="#0a45fa"/>
<rect x="875" y="188" width="3" height="5" fill="#141eff"/>
<rect x="875" y="176" width="3" height="6" fill="#1113e9"/>
<rect x="878" y="211" width="4" height="8" fill="#2bcf5f"/>
<rect x="878" y="205" width="4" height="6" fill="#0093c4"/>
<rect x="878" y="199" width="4" height="6" fill="#0098b6"/>
<rect x="878" y="193" width="4" height="6" fill="#1419fa"/>
<rect x="878" y="182" width="4" height="6" fill="#0f0fda"/>
<rect x="882" y="211" width="3" height="8" fill="#0088df"/>
<rect x="882" y="188" width="3" height="5" fill="#1227fe"/>
<rect x="885" y="199" width="3" height="6" fill="#0093c4"/>
<rect x="885" y="176" width="3" height="6" fill="#0f0fdd"/>
<rect x="888" y="211" width="4" height="8" fill="#009fa7"/>
<rect x="888" y="199" width="4" height="6" fill="#0090d0"/>
<rect x="888" y="188" width="4" height="5" fill="#1215ef"/>
<rect x="888" y="182" width="4" height="6" fill="#0e0ed2"/>
<rect x="892" y="199" width="3" height="6" fill="#102dfd"/>
<rect x="892" y="193" width="3" height="6" fill="#1419fa"/>
<rect x="895" y="188" width="4" height="5" fill="#1227fe"/>
<rect x="895" y="182" width="4" height="6" fill="#0465f1"/>
<rect x="895" y="176" width="4" height="6" fill="#141dfe"/>
<rect x="899" y="211" width="3" height="8" fill="#38d456"/>
<rect x="899" y="182" width="3" height="6" fill="#0d0dc9"/>
<rect x="902" y="211" width="4" height="8" fill="#00a59b"/>
<rect x="902" y="205" width="4" height="6" fill="#0367f0"/>
<rect x="902" y="170" width="4" height="6" fill="#0a0ab7"/>
<rect x="906" y="211" width="3" height="8" fill="#009ea9"/>
<rect x="906" y="199" width="3" height="6" fill="#008fd7"/>
<rect x="906" y="193" width="3" height="6" fill="#0079ea"/>
<rect x="909" y="211" width="3" height="8" fill="#009ab1"/>
<rect x="909" y="205" width="3" height="6" fill="#0756f5"/>
<rect x="909" y="199" width="3" height="6" fill="#102ffd"/>
<rect x="909" y="182" width="3" height="6" fill="#141eff"/>
<rect x="909" y="176" width="3" height="6" fill="#0b0bc0"/>
<rect x="912" y="199" width="4" height="6" fill="#0090d3"/>
<rect x="912" y="193" width="4" height="6" fill="#141bfc"/>
<rect x="912" y="188" width="4" height="5" fill="#1128fe"/>
<rect x="916" y="211" width="3" height="8" fill="#1ec867"/>
<rect x="916" y="170" width="3" height="6" fill="#0c0cc7"/>
<rect x="919" y="211" width="4" height="8" fill="#31d15b"/>
<rect x="919" y="205" width="4" height="6" fill="#007de7"/>
<rect x="919" y="199" width="4" height="6" fill="#007ce8"/>
<rect x="919" y="188" width="4" height="5" fill="#0b43fa"/>
<rect x="919" y="176" width="4" height="6" fill="#141cfd"/>
<rect x="923" y="199" width="3" height="6" fill="#0082e3"/>
<rect x="926" y="199" width="4" height="6" fill="#008bdc"/>
<rect x="930" y="182" width="3" height="6" fill="#141afb"/>
<rect x="933" y="211" width="3" height="8" fill="#007fe5"/>
<rect x="933" y="205" width="3" height="6" fill="#0090d4"/>
<rect x="936" y="211" width="4" height="8" fill="#35d358"/>
<rect x="936" y="205" width="4" height="6" fill="#0092c8"/>
<rect x="940" y="211" width="3" height="8" fill="#7ce82f"/>
<rect x="940" y="193" width="3" height="6" fill="#141cfd"/>
<rect x="940" y="188" width="3" height="5" fill="#055ff3"/>
<rect x="943" y="211" width="4" height="8" fill="#2ed05c"/>
<rect x="943" y="205" width="4" height="6" fill="#04ab91"/>
<rect x="943" y="193" width="4" height="6" fill="#141dfe"/>
<rect x="943" y="188" width="4" height="5" fill="#1010df"/>
<rect x="947" y="211" width="3" height="8" fill="#69e436"/>
<rect x="947" y="205" width="3" height="6" fill="#008fd4"/>
<rect x="947" y="188" width="3" height="5" fill="#0850f7"/>
<rect x="947" y="182" width="3" height="6" fill="#0a0ab6"/>
<rect x="950" y="211" width="3" height="8" fill="#009eaa"/>
<rect x="950" y="205" width="3" height="6" fill="#03aa93"/>
<rect x="950" y="188" width="3" height="5" fill="#0c3dfb"/>
<rect x="953" y="205" width="4" height="6" fill="#05ac90"/>
<rect x="953" y="188" width="4" height="5" fill="#0f10de"/>
<rect x="957" y="211" width="3" height="8" fill="#009ab1"/>
<rect x="957" y="193" width="3" height="6" fill="#0463f1"/>
<rect x="957" y="182" width="3" height="6" fill="#141cfd"/>
<rect x="960" y="188" width="4" height="5" fill="#1227fe"/>
<rect x="960" y="176" width="4" height="6" fill="#141dfe"/>
<rect x="964" y="211" width="3" height="8" fill="#007aea"/>
<rect x="964" y="205" width="3" height="6" fill="#00a2a1"/>
<rect x="964" y="193" width="3" height="6" fill="#008fd7"/>
<rect x="964" y="188" width="3" height="5" fill="#0d0dce"/>
<rect x="967" y="205" width="4" height="6" fill="#0089de"/>
<rect x="971" y="199" width="3" height="6" fill="#0090d1"/>
<rect x="971" y="193" width="3" height="6" fill="#141dfe"/>
<rect x="971" y="182" width="3" height="6" fill="#0e0ed3"/>
<rect x="974" y="211" width="3" height="8" fill="#007de7"/>
<rect x="974" y="205" width="3" height="6" fill="#0174ec"/>
<rect x="974" y="199" width="3" height="6" fill="#0090d3"/>
<rect x="974" y="188" width="3" height="5" fill="#1320ff"/>
<rect x="974" y="170" width="3" height="6" fill="#0808a1"/>
<rect x="977" y="188" width="4" height="5" fill="#094bf9"/>
<rect x="977" y="182" width="4" height="6" fill="#0d0dc9"/>
<rect x="981" y="188" width="3" height="5" fill="#141dfe"/>
<rect x="984" y="205" width="4" height="6" fill="#1226fe"/>
<rect x="984" y="199" width="4" height="6" fill="#0095bd"/>
<rect x="984" y="188" width="4" height="5" fill="#1012e5"/>
<rect x="984" y="182" width="4" height="6" fill="#1317f5"/>
<rect x="988" y="211" width="3" height="8" fill="#01a699"/>
<rect x="988" y="170" width="3" height="6" fill="#07079a"/>
<rect x="991" y="211" width="3" height="8" fill="#00a59b"/>
<rect x="991" y="199" width="3" height="6" fill="#0095be"/>
<rect x="991" y="193" width="3" height="6" fill="#141cfd"/>
<rect x="991" y="188" width="3" height="5" fill="#0463f1"/>
<rect x="991" y="170" width="3" height="6" fill="#0909aa"/>
<rect x="994" y="205" width="4" height="6" fill="#026fee"/>
<rect x="994" y="188" width="4" height="5" fill="#141afb"/>
<rect x="998" y="211" width="3" height="8" fill="#30d15b"/>
<rect x="1001" y="205" width="4" height="6" fill="#0462f2"/>
<rect x="1001" y="193" width="4" height="6" fill="#1420ff"/>
<rect x="1001" y="188" width="4" height="5" fill="#0852f6"/>
<rect x="1001" y="182" width="4" height="6" fill="#0851f7"/>
<rect x="1001" y="176" width="4" height="6" fill="#0a0ab5"/>
<rect x="1005" y="211" width="3" height="8" fill="#00a39e"/>
<rect x="1005" y="199" width="3" height="6" fill="#008fd5"/>
<rect x="1005" y="193" width="3" height="6" fill="#094cf8"/>
<rect x="1005" y="182" width="3" height="6" fill="#026eee"/>
<rect x="1008" y="188" width="4" height="5" fill="#1418f7"/>
<rect x="1008" y="176" width="4" height="6" fill="#1316f2"/>
<rect x="1012" y="199" width="3" height="6" fill="#0b42fb"/>
<rect x="1012" y="193" width="3" height="6" fill="#141bfc"/>
<rect x="1012" y="182" width="3" height="6" fill="#0a0ab0"/>
<rect x="1012" y="176" width="3" height="6" fill="#0e0ed3"/>
<rect x="1015" y="211" width="3" height="8" fill="#009fa7"/>
<rect x="1018" y="211" width="4" height="8" fill="#02a995"/>
<rect x="1018" y="199" width="4" height="6" fill="#141dfe"/>
<rect x="1018" y="188" width="4" height="5" fill="#1012e5"/>
<rect x="1022" y="211" width="3" height="8" fill="#0086e0"/>
<rect x="1022" y="199" width="3" height="6" fill="#0852f6"/>
<rect x="1022" y="193" width="3" height="6" fill="#0d38fc"/>
<rect x="1025" y="211" width="4" height="8" fill="#0079ea"/>
<rect x="1025" y="182" width="4" height="6" fill="#1113e7"/>
<rect x="1029" y="211" width="3" height="8" fill="#87ea2a"/>
<rect x="1029" y="193" width="3" height="6" fill="#141cfd"/>
<rect x="1029" y="170" width="3" height="6" fill="#0e0ed6"/>
<rect x="1032" y="211" width="4" height="8" fill="#0081e4"/>
<rect x="1032" y="205" width="4" height="6" fill="#008ed9"/>
<rect x="1032" y="193" width="4" height="6" fill="#036aef"/>
<rect x="1032" y="188" width="4" height="5" fill="#141afb"/>
<rect x="1036" y="211" width="3" height="8" fill="#0080e5"/>
<rect x="1036" y="205" width="3" height="6" fill="#0096ba"/>
<rect x="1036" y="193" width="3" height="6" fill="#141dfe"/>
<rect x="1036" y="188" width="3" height="5" fill="#1112e5"/>
<rect x="1039" y="211" width="3" height="8" fill="#89ea29"/>
<rect x="1039" y="199" width="3" height="6" fill="#026dee"/>
<rect x="1042" y="211" width="4" height="8" fill="#0088df"/>
<rect x="1046" y="211" width="3" height="8" fill="#007ee6"/>
<rect x="1046" y="205" width="3" height="6" fill="#0081e4"/>
<rect x="1046" y="193" width="3" height="6" fill="#141afb"/>
<rect x="1046" y="182" width="3" height="6" fill="#0757f5"/>
<rect x="1049" y="211" width="4" height="8" fill="#02a995"/>
<rect x="1049" y="205" width="4" height="6" fill="#0099b2"/>
<rect x="1049" y="199" width="4" height="6" fill="#0560f2"/>
<rect x="1049" y="193" width="4" height="6" fill="#141cfd"/>
<rect x="1053" y="211" width="3" height="8" fill="#03a994"/>
<rect x="1053" y="199" width="3" height="6" fill="#0095bc"/>
<rect x="1053" y="193" width="3" height="6" fill="#1419fa"/>
<rect x="1053" y="182" width="3" height="6" fill="#0462f1"/>
<rect x="1053" y="176" width="3" height="6" fill="#0d0dcb"/>
<rect x="1056" y="211" width="3" height="8" fill="#00a2a1"/>
<rect x="1059" y="211" width="4" height="8" fill="#01a69a"/>
<rect x="1059" y="199" width="4" height="6" fill="#0085e1"/>
<rect x="1063" y="211" width="3" height="8" fill="#1ac66a"/>
<rect x="1063" y="205" width="3" height="6" fill="#0c3ffb"/>
<rect x="1063" y="199" width="3" height="6" fill="#0095be"/>
<rect x="1063" y="176" width="3" height="6" fill="#0b0bc0"/>
<rect x="1070" y="211" width="3" height="8" fill="#00a2a1"/>
<rect x="1070" y="205" width="3" height="6" fill="#0e37fc"/>
<rect x="1070" y="199" width="3" height="6" fill="#0098b6"/>
<rect x="1070" y="193" width="3" height="6" fill="#1419fa"/>
<rect x="1070" y="188" width="3" height="5" fill="#0d0dd0"/>
<rect x="1073" y="205" width="4" height="6" fill="#008ddb"/>
<rect x="1073" y="199" width="4" height="6" fill="#112bfd"/>
<rect x="1073" y="193" width="4" height="6" fill="#0a45fa"/>
<rect x="1077" y="205" width="3" height="6" fill="#0d3cfb"/>
<rect x="1077" y="182" width="3" height="6" fill="#1419fa"/>
<rect x="157" y="36" width="4" height="5" fill="#0a0a96"/>
<rect x="422" y="165" width="4" height="5" fill="#0a0aa0"/>
<rect class="fg" x="91" y="212" width="4" height="1"/>
<rect class="fg" x="91" y="200" width="4" height="1"/>
<rect class="fg" x="91" y="191" width="4" height="1"/>
<rect class="fg" x="91" y="183" width="4" height="1"/>
<rect class="fg" x="91" y="176" width="4" height="1"/>
<rect class="fg" x="91" y="171" width="4" height="1"/>
<rect class="fg" x="91" y="166" width="4" height="1"/>
<rect class="fg" x="87" y="161" width="8" height="1"/>
<rect class="fg" x="91" y="132" width="4" height="1"/>
<rect class="fg" x="91" y="115" width="4" height="1"/>
<rect class="fg" x="91" y="103" width="4" height="1"/>
<rect class="fg" x="91" y="94" width="4" height="1"/>
<rect class="fg" x="91" y="86" width="4" height="1"/>
<rect class="fg" x="91" y="79" width="4" height="1"/>
<rect class="fg" x="91" y="74" width="4" height="1"/>
<rect class="fg" x="91" y="69" width="4" height="1"/>
<rect class="fg" x="87" y="64" width="8" height="1"/>
<rect class="fg" x="91" y="35" width="4" height="1"/>
<rect x="95" y="224" width="986" height="193" fill="#000"/>
<rect class="fg" x="91" y="407" width="4" height="1"/>
<rect class="fg" x="91" y="391" width="4" height="1"/>
<rect class="fg" x="91" y="378" width="4" height="1"/>
<rect class="fg" x="91" y="368" width="4" height="1"/>
<rect class="fg" x="91" y="359" width="4" height="1"/>
<rect class="fg" x="91" y="352" width="4" height="1"/>
<rect class="fg" x="91" y="345" width="4" height="1"/>
<rect class="fg" x="87" y="339" width="8" height="1"/>
<rect class="fg" x="91" y="334" width="4" height="1"/>
<rect class="fg" x="91" y="329" width="4" height="1"/>
<rect class="fg" x="91" y="324" width="4" height="1"/>
<rect class="fg" x="91" y="320" width="4" height="1"/>
<rect class="fg" x="91" y="316" width="4" height="1"/>
<rect class="fg" x="91" y="312" width="4" height="1"/>
<rect class="fg" x="91" y="309" width="4" height="1"/>
<rect class="fg" x="91" y="306" width="4" height="1"/>
<rect class="fg" x="91" y="303" width="4" height="1"/>
<rect class="fg" x="87" y="300" width="8" height="1"/>
<rect class="fg" x="91" y="297" width="4" height="1"/>
<rect class="fg" x="91" y="294" width="4" height="1"/>
<rect class="fg" x="91" y="292" width="4" height="1"/>
<rect class="fg" x="91" y="290" width="4" height="1"/>
<rect class="fg" x="91" y="287" width="4" height="1"/>
<rect class="fg" x="91" y="285" width="4" height="1"/>
<rect class="fg" x="91" y="283" width="4" height="1"/>
<rect class="fg" x="91" y="281" width="4" height="1"/>
<rect class="fg" x="91" y="279" width="4" height="1"/>
<rect class="fg" x="87" y="277" width="8" height="1"/>
<rect class="fg" x="91" y="275" width="4" height="1"/>
<rect class="fg" x="91" y="273" width="4" height="1"/>
<rect class="fg" x="91" y="272" width="4" height="1"/>
<rect class="fg" x="91" y="270" width="4" height="1"/>
<rect class="fg" x="91" y="268" width="4" height="1"/>
<rect class="fg" x="91" y="267" width="4" height="1"/>
<rect class="fg" x="91" y="265" width="4" height="1"/>
<rect class="fg" x="91" y="264" width="4" height="1"/>
<rect class="fg" x="91" y="262" width="4" height="1"/>
<rect class="fg" x="87" y="261" width="8" height="1"/>
<rect class="fg" x="91" y="259" width="4" height="1"/>
<rect class="fg" x="91" y="258" width="4" height="1"/>
<rect class="fg" x="91" y="257" width="4" height="1"/>
<rect class="fg" x="91" y="255" width="4" height="1"/>
<rect class="fg" x="91" y="254" width="4" height="1"/>
<rect class="fg" x="91" y="253" width="4" height="1"/>
<rect class="fg" x="91" y="252" width="4" height="1"/>
<rect class="fg" x="91" y="250" width="4" height="1"/>
<rect class="fg" x="91" y="249" width="4" height="1"/>
<rect class="fg" x="87" y="248" width="8" height="1"/>
<rect class="fg" x="91" y="247" width="4" height="1"/>
<rect class="fg" x="91" y="246" width="4" height="1"/>
<rect class="fg" x="91" y="245" width="4" height="1"/>
<rect class="fg" x="91" y="244" width="4" height="1"/>
<rect class="fg" x="91" y="243" width="4" height="1"/>
<rect class="fg" x="91" y="242" width="4" height="1"/>
<rect class="fg" x="91" y="241" width="4" height="1"/>
<rect class="fg" x="91" y="240" width="4" height="1"/>
<rect class="fg" x="91" y="239" width="4" height="1"/>
<rect class="fg" x="87" y="238" width="8" height="1"/>
<rect class="fg" x="91" y="237" width="4" height="1"/>
<rect class="fg" x="91" y="236" width="4" height="1"/>
<rect class="fg" x="91" y="235" width="4" height="1"/>
<rect class="fg" x="91" y="234" width="4" height="1"/>
<rect class="fg" x="91" y="233" width="4" height="1"/>
<rect class="fg" x="91" y="232" width="4" height="1"/>
<rect class="fg" x="91" y="232" width="4" height="1"/>
<rect class="fg" x="91" y="231" width="4" height="1"/>
<rect class="fg" x="91" y="230" width="4" height="1"/>
<rect class="fg" x="87" y="229" width="8" height="1"/>
<rect class="fg" x="91" y="228" width="4" height="1"/>
<rect class="fg" x="91" y="228" width="4" height="1"/>
<rect class="fg" x="91" y="227" width="4" height="1"/>
<rect class="fg" x="91" y="226" width="4" height="1"/>
<rect class="fg" x="91" y="225" width="4" height="1"/>
<rect class="fg" x="91" y="224" width="4" height="1"/>
<rect x="283" y="400" width="2" height="1" fill="#0a0a78"/>
<rect x="728" y="400" width="2" height="1" fill="#0a0a78"/>
<rect x="95.5" y="420.5" width="985" height="89" fill="#fff" stroke="#333" stroke-width="1"/>
<rect class="fg" x="91" y="509" width="4" height="1"/>
<rect class="fg" x="91" y="507" width="4" height="1"/>
<rect class="fg" x="91" y="505" width="4" height="1"/>
<rect class="fg" x="91" y="504" width="4" height="1"/>
<rect class="fg" x="91" y="503" width="4" height="1"/>
<rect class="fg" x="87" y="502" width="8" height="1"/>
<rect class="fg" x="91" y="495" width="4" height="1"/>
<rect class="fg" x="91" y="492" width="4" height="1"/>
<rect class="fg" x="91" y="489" width="4" height="1"/>
<rect class="fg" x="91" y="487" width="4" height="1"/>
<rect class="fg" x="91" y="485" width="4" height="1"/>
<rect class="fg" x="91" y="483" width="4" height="1"/>
<rect class="fg" x="91" y="482" width="4" height="1"/>
<rect class="fg" x="91" y="481" width="4" height="1"/>
<rect class="fg" x="87" y="480" width="8" height="1"/>
<rect class="fg" x="91" y="473" width="4" height="1"/>
<rect class="fg" x="91" y="470" width="4" height="1"/>
<rect class="fg" x="91" y="467" width="4" height="1"/>
<rect class="fg" x="91" y="465" width="4" height="1"/>
<rect class="fg" x="91" y="463" width="4" height="1"/>
<rect class="fg" x="91" y="461" width="4" height="1"/>
<rect class="fg" x="91" y="460" width="4" height="1"/>
<rect class="fg" x="91" y="459" width="4" height="1"/>
<rect class="fg" x="87" y="458" width="8" height="1"/>
<rect class="fg" x="91" y="451" width="4" height="1"/>
<rect class="fg" x="91" y="448" width="4" height="1"/>
<rect class="fg" x="91" y="445" width="4" height="1"/>
<rect class="fg" x="91" y="443" width="4" height="1"/>
<rect class="fg" x="91" y="441" width="4" height="1"/>
<rect class="fg" x="91" y="439" width="4" height="1"/>
<rect class="fg" x="91" y="438" width="4" height="1"/>
<rect class="fg" x="91" y="437" width="4" height="1"/>
<rect class="fg" x="87" y="436" width="8" height="1"/>
<rect class="fg" x="91" y="429" width="4" height="1"/>
<rect class="fg" x="91" y="426" width="4" height="1"/>
<rect class="fg" x="91" y="423" width="4" height="1"/>
<rect class="fg" x="91" y="421" width="4" height="1"/>
<rect class="fg" x="136" y="507" width="1" height="2"/>
<rect class="fg" x="177" y="507" width="1" height="2"/>
<rect class="fg" x="218" y="507" width="1" height="2"/>
<rect class="fg" x="259" y="507" width="1" height="2"/>
<rect class="fg" x="300" y="507" width="1" height="2"/>
<rect class="fg" x="341" y="507" width="1" height="2"/>
<rect class="fg" x="382" y="507" width="1" height="2"/>
<rect class="fg" x="423" y="507" width="1" height="2"/>
<rect class="fg" x="464" y="507" width="1" height="2"/>
<rect class="fg" x="505" y="507" width="1" height="2"/>
<rect class="fg" x="546" y="507" width="1" height="2"/>
<rect class="fg" x="587" y="507" width="1" height="2"/>
<rect class="fg" x="628" y="507" width="1" height="2"/>
<rect class="fg" x="669" y="507" width="1" height="2"/>
<rect class="fg" x="710" y="507" width="1" height="2"/>
<rect class="fg" x="751" y="507" width="1" height="2"/>
<rect class="fg" x="792" y="507" width="1" height="2"/>
<rect class="fg" x="833" y="507" width="1" height="2"/>
<rect class="fg" x="874" y="507" width="1" height="2"/>
<rect class="fg" x="915" y="507" width="1" height="2"/>
<rect class="fg" x="956" y="507" width="1" height="2"/>
<rect class="fg" x="997" y="507" width="1" height="2"/>
<rect class="fg" x="1038" y="507" width="1" height="2"/>
<rect x="95" y="513" width="986" height="179" fill="#000"/>
<rect class="fg" x="91" y="686" width="4" height="1"/>
<rect class="fg" x="91" y="680" width="4" height="1"/>
<rect class="fg" x="91" y="675" width="4" height="1"/>
<rect class="fg" x="91" y="670" width="4" height="1"/>
<rect class="fg" x="91" y="667" width="4" height="1"/>
<rect class="fg" x="91" y="664" width="4" height="1"/>
<rect class="fg" x="91" y="661" width="4" height="1"/>
<rect class="fg" x="87" y="659" width="8" height="1"/>
<rect class="fg" x="91" y="643" width="4" height="1"/>
<rect class="fg" x="91" y="634" width="4" height="1"/>
<rect class="fg" x="91" y="627" width="4" height="1"/>
<rect class="fg" x="91" y="622" width="4" height="1"/>
<rect class="fg" x="91" y="618" width="4" height="1"/>
<rect class="fg" x="91" y="615" width="4" height="1"/>
<rect class="fg" x="91" y="611" width="4" height="1"/>
<rect class="fg" x="91" y="609" width="4" height="1"/>
<rect class="fg" x="87" y="606" width="8" height="1"/>
<rect class="fg" x="91" y="591" width="4" height="1"/>
<rect class="fg" x="91" y="581" width="4" height="1"/>
<rect class="fg" x="91" y="575" width="4" height="1"/>
<rect class="fg" x="91" y="570" width="4" height="1"/>
<rect class="fg" x="91" y="566" width="4" height="1"/>
<rect class="fg" x="91" y="562" width="4" height="1"/>
<rect class="fg" x="91" y="559" width="4" height="1"/>
<rect class="fg" x="91" y="556" width="4" height="1"/>
<rect class="fg" x="87" y="554" width="8" height="1"/>
<rect class="fg" x="91" y="538" width="4" height="1"/>
<rect class="fg" x="91" y="529" width="4" height="1"/>
<rect class="fg" x="91" y="522" width="4" height="1"/>
<rect class="fg" x="91" y="517" width="4" height="1"/>
<rect class="fg" x="91" y="513" width="4" height="1"/>
<rect x="136" y="218" width="1" height="2" fill="#333"/>
<rect x="136" y="414" width="1" height="2" fill="#333"/>
<rect x="177" y="218" width="1" height="2" fill="#333"/>
<rect x="177" y="414" width="1" height="2" fill="#333"/>
<rect x="218" y="218" width="1" height="2" fill="#333"/>
<rect x="218" y="414" width="1" height="2" fill="#333"/>
<rect x="259" y="218" width="1" height="2" fill="#333"/>
<rect x="259" y="414" width="1" height="2" fill="#333"/>
<rect x="300" y="218" width="1" height="2" fill="#333"/>
<rect x="300" y="414" width="1" height="2" fill="#333"/>
<rect x="341" y="218" width="1" height="2" fill="#333"/>
<rect x="341" y="414" width="1" height="2" fill="#333"/>
<rect x="382" y="218" width="1" height="2" fill="#333"/>
<rect x="382" y="414" width="1" height="2" fill="#333"/>
<rect x="423" y="218" width="1" height="2" fill="#333"/>
<rect x="423" y="414" width="1" height="2" fill="#333"/>
<rect x="464" y="218" width="1" height="2" fill="#333"/>
<rect x="464" y="414" width="1" height="2" fill="#333"/>
<rect x="505" y="218" width="1" height="2" fill="#333"/>
<rect x="505" y="414" width="1" height="2" fill="#333"/>
<rect x="546" y="218" width="1" height="2" fill="#333"/>
<rect x="546" y="414" width="1" height="2" fill="#333"/>
<rect x="587" y="218" width="1" height="2" fill="#333"/>
<rect x="587" y="414" width="1" height="2" fill="#333"/>
<rect x="628" y="218" width="1" height="2" fill="#333"/>
<rect x="628" y="414" width="1" height="2" fill="#333"/>
<rect x="669" y="218" width="1" height="2" fill="#333"/>
<rect x="669" y="414" width="1" height="2" fill="#333"/>
<rect x="710" y="218" width="1" height="2" fill="#333"/>
<rect x="710" y="414" width="1" height="2" fill="#333"/>
<rect x="751" y="218" width="1" height="2" fill="#333"/>
<rect x="751" y="414" width="1" height="2" fill="#333"/>
<rect x="792" y="218" width="1" height="2" fill="#333"/>
<rect x="792" y="414" width="1" height="2" fill="#333"/>
<rect x="833" y="218" width="1" height="2" fill="#333"/>
<rect x="833" y="414" width="1" height="2" fill="#333"/>
<rect x="874" y="218" width="1" height="2" fill="#333"/>
<rect x="874" y="414" width="1" height="2" fill="#333"/>
<rect x="915" y="218" width="1" height="2" fill="#333"/>
<rect x="915" y="414" width="1" height="2" fill="#333"/>
<rect x="956" y="218" width="1" height="2" fill="#333"/>
<rect x="956" y="414" width="1" height="2" fill="#333"/>
<rect x="997" y="218" width="1" height="2" fill="#333"/>
<rect x="997" y="414" width="1" height="2" fill="#333"/>
<rect x="1038" y="218" width="1" height="2" fill="#333"/>
<rect x="1038" y="414" width="1" height="2" fill="#333"/>
</g>
<path shape-rendering="crispEdges" fill="url(#g4)" d="M138 521h1V527h-1zM821 519h1V530h-1zM990 515h1V530h-1zM949 515h1V527h-1zM356 517h1V527h-1zM911 516h1V527h-1zM412 527h1V551h-1zM414 527h3V568h-3zM99 527h1V580h-1zM143 527h1V580h-1zM150 530h1V555h-1zM821 530h3V555h-3zM1011 527h3V551h-3zM860 527h1V580h-1zM423 527h2V568h-2zM983 527h1V551h-1zM496 527h2V551h-2zM536 527h1V551h-1zM840 527h1V551h-1zM473 527h1V551h-1zM961 527h1V551h-1zM466 527h2V551h-2zM402 530h1V555h-1zM998 527h2V551h-2zM462 530h2V568h-2zM1030 527h2V568h-2zM486 527h3V568h-3zM527 530h2V555h-2zM119 530h2V568h-2zM350 530h1V555h-1zM976 527h1V551h-1zM959 530h1V584h-1zM379 527h2V551h-2zM830 527h1V551h-1zM441 527h2V605h-2zM895 527h1V568h-1zM936 527h2V551h-2zM339 527h2V605h-2zM781 527h1V551h-1zM589 527h2V605h-2zM374 527h3V551h-3zM1067 527h1V551h-1zM842 530h2V555h-2zM171 527h4V568h-4zM477 527h2V551h-2zM972 527h1V580h-1zM391 530h4V555h-4zM342 530h3V584h-3zM968 527h1V568h-1zM283 530h1V568h-1zM929 527h3V568h-3zM729 527h2V551h-2zM491 530h1V555h-1zM1008 527h1V580h-1zM605 527h1V580h-1zM905 530h2V568h-2zM892 527h1V551h-1zM456 527h2V580h-2zM1020 530h2V555h-2zM1033 527h1V551h-1zM256 527h2V568h-2zM277 527h1V605h-1zM916 527h1V551h-1zM196 527h2V580h-2zM714 527h2V551h-2zM776 527h2V551h-2zM447 530h2V555h-2zM1024 530h1V555h-1zM595 527h1V618h-1zM205 527h2V551h-2zM939 527h1V551h-1zM757 530h1V568h-1zM899 530h2V584h-2zM679 530h2V555h-2zM433 530h1V568h-1zM1003 527h1V551h-1zM564 527h1V568h-1zM691 527h1V551h-1zM871 530h1V555h-1zM773 530h2V555h-2zM702 527h1V605h-1zM641 530h1V584h-1zM315 527h1V551h-1zM242 530h3V555h-3zM805 527h1V551h-1zM1059 527h2V551h-2zM148 530h1V584h-1zM179 527h2V551h-2zM813 530h2V555h-2zM250 527h2V568h-2zM302 527h1V551h-1zM187 527h2V568h-2zM398 527h1V551h-1zM1057 527h1V568h-1zM845 530h3V555h-3zM405 527h1V551h-1zM628 530h1V568h-1zM779 530h1V555h-1zM299 555h2V584h-2zM444 551h1V647h-1zM659 551h2V580h-2zM691 551h2V568h-2zM519 555h3V584h-3zM302 551h2V580h-2zM536 555h3V568h-3zM477 551h1V568h-1zM675 555h1V568h-1zM493 555h2V568h-2zM1063 555h4V568h-4zM500 555h2V568h-2zM754 555h2V568h-2zM156 555h2V568h-2zM233 551h1V568h-1zM1045 551h1V568h-1zM850 551h2V580h-2zM843 551h1V568h-1zM597 551h3V568h-3zM916 555h1V568h-1zM401 551h1V568h-1zM613 555h1V568h-1zM201 551h3V568h-3zM662 551h3V618h-3zM541 551h2V580h-2zM1061 555h1V618h-1zM378 551h4V605h-4zM704 551h2V568h-2zM1078 551h2V568h-2zM680 551h1V568h-1zM713 551h1V605h-1zM921 551h2V568h-2zM397 551h2V568h-2zM752 551h1V568h-1zM869 551h1V568h-1zM743 551h1V568h-1zM639 551h1V580h-1zM239 551h2V605h-2zM726 551h1V568h-1zM677 555h2V584h-2zM104 551h1V568h-1zM737 555h1V618h-1zM394 555h1V568h-1zM470 551h3V568h-3zM279 551h2V568h-2zM912 551h1V568h-1zM368 551h2V568h-2zM783 551h1V568h-1zM225 555h1V568h-1zM218 551h1V605h-1zM715 551h1V568h-1zM584 551h2V568h-2zM127 551h2V647h-2zM309 568h3V584h-3zM222 568h1V580h-1zM1037 568h1V584h-1zM234 568h1V605h-1zM285 568h1V584h-1zM287 568h1V618h-1zM335 568h2V605h-2zM279 568h1V584h-1zM884 568h1V580h-1zM353 568h2V647h-2zM610 568h1V605h-1zM400 568h2V584h-2zM475 568h1V580h-1zM167 568h1V580h-1zM150 568h1V618h-1zM1045 568h3V605h-3zM492 568h2V584h-2zM922 568h2V605h-2zM751 568h1V580h-1zM1070 568h1V618h-1zM154 568h1V580h-1zM369 568h1V580h-1zM320 568h3V584h-3zM956 568h1V580h-1zM536 568h2V580h-2zM130 568h1V605h-1zM647 568h2V605h-2zM255 568h1V618h-1zM464 568h2V580h-2zM106 568h2V580h-2zM366 568h1V580h-1zM744 568h2V580h-2zM583 568h1V618h-1zM748 568h1V605h-1zM261 568h2V580h-2zM468 568h2V605h-2zM760 568h1V618h-1zM937 568h2V580h-2zM568 568h2V580h-2zM935 568h1V580h-1zM162 568h2V605h-2zM404 568h1V580h-1zM231 568h2V605h-2zM188 568h2V580h-2zM356 568h2V631h-2zM822 568h2V580h-2zM891 568h1V580h-1zM892 580h2V605h-2zM544 584h1V605h-1zM1008 584h1V618h-1zM706 580h1V605h-1zM765 580h2V676h-2zM196 605h2V631h-2zM868 605h1V676h-1zM566 605h2V618h-2zM969 605h2V618h-2zM883 605h1V631h-1zM276 605h3V631h-3zM273 605h2V631h-2zM442 605h1V647h-1zM937 605h1V618h-1zM199 605h1V631h-1zM420 605h1V618h-1zM928 605h1V618h-1zM666 605h1V631h-1zM253 605h1V618h-1zM339 605h2V618h-2zM580 605h1V618h-1zM573 605h1V664h-1zM603 605h1V618h-1zM781 605h2V618h-2zM981 605h1V618h-1zM515 605h1V664h-1zM247 605h1V618h-1zM214 605h3V631h-3zM901 605h1V618h-1zM251 605h1V618h-1zM293 605h2V618h-2zM588 605h2V618h-2zM454 605h2V647h-2zM717 605h1V631h-1zM240 605h1V618h-1zM111 605h1V647h-1zM954 605h1V618h-1zM336 605h2V618h-2zM848 605h1V618h-1zM981 618h1V631h-1zM925 618h1V647h-1zM162 618h1V647h-1zM648 618h2V631h-2zM564 618h1V631h-1zM1069 618h1V664h-1zM570 618h2V631h-2zM211 618h1V631h-1zM604 618h1V647h-1zM250 618h1V676h-1zM737 618h1V647h-1zM739 618h3V631h-3zM669 618h1V631h-1zM1061 618h1V647h-1zM1021 618h2V647h-2zM176 618h1V664h-1zM218 618h1V647h-1zM542 618h1V647h-1zM421 618h2V664h-2zM536 618h2V631h-2zM230 618h1V631h-1zM238 618h2V631h-2zM533 618h1V647h-1zM1064 618h1V664h-1zM494 618h3V647h-3zM186 618h1V647h-1zM996 618h2V631h-2zM337 618h1V647h-1zM675 618h1V631h-1zM973 618h2V647h-2zM838 618h1V647h-1zM987 618h1V647h-1zM878 618h1V631h-1zM630 618h1V631h-1zM1015 618h1V631h-1zM943 618h1V631h-1zM498 618h1V631h-1zM1031 631h1V647h-1zM969 631h1V664h-1zM148 631h1V664h-1zM806 631h1V676h-1zM664 631h1V647h-1zM951 631h2V647h-2zM855 631h1V647h-1zM618 631h1V647h-1zM812 631h1V647h-1zM322 631h1V647h-1zM388 631h1V664h-1zM623 631h3V647h-3zM116 631h1V664h-1zM316 631h1V664h-1zM776 631h1V647h-1zM843 631h1V690h-1zM296 631h2V664h-2zM390 631h1V690h-1zM535 631h2V647h-2zM103 631h1V664h-1zM863 631h2V647h-2zM965 631h2V647h-2zM180 631h1V647h-1zM772 631h1V664h-1zM669 631h1V676h-1zM286 631h2V647h-2zM732 631h1V647h-1zM226 631h1V647h-1zM815 631h1V647h-1zM509 631h1V647h-1zM976 631h1V664h-1zM256 631h1V676h-1zM740 631h1V647h-1zM394 631h2V647h-2zM170 631h1V647h-1zM521 631h1V647h-1zM627 631h1V647h-1zM678 631h1V676h-1zM585 647h1V664h-1zM125 647h1V676h-1zM217 647h1V690h-1zM503 647h1V664h-1zM731 647h1V676h-1zM810 647h1V664h-1zM356 647h2V664h-2zM214 647h2V664h-2zM242 647h1V690h-1zM710 647h2V664h-2zM186 647h1V664h-1zM546 647h1V690h-1zM465 647h2V664h-2zM780 647h2V664h-2zM344 647h1V676h-1zM542 647h1V676h-1zM369 647h1V676h-1zM816 647h1V664h-1zM492 647h2V690h-2zM451 647h1V664h-1zM567 647h1V664h-1zM858 647h1V664h-1zM476 647h1V664h-1zM272 647h1V664h-1zM1072 647h1V676h-1zM524 647h1V664h-1zM736 647h1V690h-1zM987 647h2V664h-2zM751 647h1V690h-1zM715 647h1V664h-1zM323 647h2V664h-2zM993 647h1V690h-1zM821 647h2V664h-2zM961 647h1V664h-1zM133 647h2V676h-2zM620 647h1V664h-1zM321 647h1V690h-1zM971 647h1V664h-1zM978 647h1V664h-1zM870 647h1V664h-1zM183 647h1V664h-1zM626 647h1V664h-1zM692 647h3V664h-3zM1049 664h2V676h-2zM451 664h2V676h-2zM111 664h2V676h-2zM567 664h1V690h-1zM580 664h1V690h-1zM798 664h1V676h-1zM245 664h1V676h-1zM656 664h1V676h-1zM988 664h2V676h-2zM456 664h2V676h-2zM490 664h1V690h-1zM959 664h1V690h-1zM158 664h1V676h-1zM629 664h1V690h-1zM416 664h1V676h-1zM115 664h2V676h-2zM857 664h1V690h-1zM871 664h1V676h-1zM935 664h3V676h-3zM210 664h1V690h-1zM1047 664h1V690h-1zM284 664h1V676h-1zM419 664h1V690h-1zM307 664h1V676h-1zM171 664h1V690h-1zM317 664h1V676h-1zM1029 664h2V676h-2zM800 664h2V676h-2zM706 664h1V690h-1zM975 664h1V690h-1zM661 664h1V690h-1zM874 664h1V676h-1zM610 664h1V676h-1zM384 664h2V676h-2zM955 664h1V690h-1zM363 664h1V676h-1zM658 664h1V676h-1zM593 664h1V676h-1zM154 664h1V676h-1zM395 664h2V676h-2zM711 664h1V676h-1zM282 664h1V690h-1zM854 664h1V676h-1zM863 664h1V676h-1zM759 664h1V690h-1zM995 664h2V676h-2zM330 664h1V690h-1zM131 664h1V690h-1zM293 664h1V690h-1zM698 664h1V676h-1zM576 664h2V676h-2zM505 664h1V676h-1zM709 664h1V690h-1zM200 664h2V676h-2zM588 676h1V690h-1zM616 676h2V690h-2zM1059 676h1V690h-1zM599 676h1V690h-1zM592 676h2V690h-2zM713 676h2V690h-2zM829 676h2V690h-2zM449 676h1V690h-1zM473 676h1V690h-1zM1050 676h1V690h-1zM894 676h1V690h-1zM738 676h3V690h-3zM610 676h3V690h-3zM288 676h1V690h-1zM312 676h2V690h-2zM788 676h1V690h-1zM1063 676h1V690h-1zM915 676h3V690h-3zM424 676h4V690h-4zM910 676h1V690h-1zM316 676h1V690h-1zM1027 676h1V690h-1zM692 676h1V690h-1zM443 676h3V690h-3zM452 676h2V690h-2zM148 676h3V690h-3zM774 676h3V690h-3zM664 676h3V690h-3zM869 676h4V690h-4zM465 676h3V690h-3zM212 676h2V690h-2zM575 676h1V690h-1zM1037 676h3V690h-3zM810 676h3V690h-3zM513 676h3V690h-3zM684 676h3V690h-3zM690 676h1V690h-1zM502 676h1V690h-1zM949 676h1V690h-1zM377 676h1V690h-1zM324 676h1V690h-1zM343 676h3V690h-3zM801 676h2V690h-2zM355 676h1V690h-1zM159 676h2V690h-2zM1069 676h2V690h-2zM898 676h2V690h-2zM972 676h1V690h-1zM658 676h1V690h-1zM100 676h2V690h-2zM166 676h1V690h-1zM863 676h1V690h-1zM761 676h1V690h-1zM977 676h1V690h-1zM833 676h3V690h-3zM204 676h2V690h-2zM334 676h2V690h-2zM402 676h1V690h-1zM582 676h2V690h-2zM748 676h2V690h-2zM988 676h1V690h-1zM930 676h2V690h-2zM417 676h1V690h-1zM990 676h1V690h-1zM1030 676h1V690h-1zM621 676h2V690h-2zM337 676h1V690h-1zM839 676h2V690h-2zM318 676h1V690h-1zM392 676h2V690h-2zM511 676h1V690h-1zM505 676h3V690h-3zM509 676h1V690h-1zM757 676h1V690h-1zM790 676h1V690h-1zM185 676h3V690h-3z"/>
<path shape-rendering="crispEdges" fill="url(#g4a)" d="M655 520h1V527h-1zM815 520h1V530h-1zM695 521h1V527h-1zM880 517h1V530h-1zM677 518h1V530h-1zM515 527h2V551h-2zM954 527h1V580h-1zM319 527h1V568h-1zM809 527h1V605h-1zM1037 530h1V555h-1zM137 530h1V584h-1zM177 527h1V551h-1zM883 530h1V568h-1zM709 530h2V555h-2zM482 527h2V568h-2zM645 527h1V647h-1zM1040 527h2V568h-2zM941 530h1V555h-1zM577 527h3V551h-3zM518 527h2V551h-2zM721 527h1V568h-1zM1035 530h1V555h-1zM698 527h1V580h-1zM1006 530h1V568h-1zM209 527h1V551h-1zM750 527h1V551h-1zM387 527h1V551h-1zM836 527h2V551h-2zM546 527h2V551h-2zM656 527h1V580h-1zM246 527h2V551h-2zM570 530h2V568h-2zM885 530h2V568h-2zM154 530h3V555h-3zM419 527h1V580h-1zM293 527h2V568h-2zM427 527h3V568h-3zM663 527h1V551h-1zM507 527h4V551h-4zM793 530h1V555h-1zM152 527h1V551h-1zM1074 527h1V605h-1zM1076 530h1V568h-1zM668 527h2V580h-2zM355 530h1V568h-1zM732 527h1V551h-1zM162 527h2V551h-2zM328 555h2V605h-2zM602 551h1V568h-1zM551 551h1V568h-1zM653 555h2V605h-2zM556 551h2V647h-2zM914 551h1V568h-1zM553 555h2V618h-2zM490 551h1V580h-1zM747 555h3V568h-3zM760 551h1V568h-1zM117 555h1V568h-1zM1033 555h1V690h-1zM804 551h1V631h-1zM391 551h2V605h-2zM453 551h1V568h-1zM723 551h1V568h-1zM785 551h1V605h-1zM1020 551h3V605h-3zM837 551h2V568h-2zM846 551h2V580h-2zM323 555h1V568h-1zM359 551h1V580h-1zM873 555h1V568h-1zM212 555h3V605h-3zM949 568h1V584h-1zM834 568h2V584h-2zM1049 568h3V580h-3zM1026 568h2V580h-2zM841 568h1V605h-1zM1067 568h1V618h-1zM977 568h1V605h-1zM180 568h4V605h-4zM562 568h2V580h-2zM813 568h1V580h-1zM904 568h4V580h-4zM636 568h1V580h-1zM871 568h1V580h-1zM478 568h1V605h-1zM988 568h2V605h-2zM118 568h2V584h-2zM428 568h1V605h-1zM627 568h2V580h-2zM875 568h2V580h-2zM1072 568h1V605h-1zM1055 568h2V647h-2zM349 568h2V676h-2zM461 568h2V580h-2zM752 580h1V618h-1zM772 580h2V605h-2zM118 580h1V605h-1zM432 584h1V618h-1zM1037 605h2V631h-2zM914 605h2V618h-2zM723 605h1V618h-1zM234 605h1V676h-1zM412 605h2V631h-2zM732 605h2V631h-2zM507 605h1V618h-1zM446 605h1V631h-1zM950 605h1V618h-1zM861 605h1V690h-1zM690 605h2V618h-2zM675 605h1V618h-1zM426 605h1V618h-1zM181 605h2V618h-2zM775 618h1V631h-1zM937 618h1V631h-1zM182 618h1V631h-1zM426 618h2V631h-2zM301 618h2V631h-2zM1031 618h1V631h-1zM993 618h1V631h-1zM651 618h1V631h-1zM660 618h1V647h-1zM828 618h1V647h-1zM552 618h1V631h-1zM507 618h2V631h-2zM699 618h1V631h-1zM284 618h1V631h-1zM708 618h1V631h-1zM368 618h1V647h-1zM386 618h1V664h-1zM844 618h1V631h-1zM436 618h1V647h-1zM795 618h1V664h-1zM748 618h2V647h-2zM948 618h1V631h-1zM487 618h1V647h-1zM817 618h2V631h-2zM291 618h1V690h-1zM933 618h1V631h-1zM155 618h1V631h-1zM906 631h1V647h-1zM324 631h2V647h-2zM198 631h1V664h-1zM300 631h2V664h-2zM551 631h1V647h-1zM193 631h1V664h-1zM403 631h1V664h-1zM1029 631h1V647h-1zM911 631h1V647h-1zM230 631h2V676h-2zM578 631h1V664h-1zM413 631h3V647h-3zM289 631h1V647h-1zM283 631h1V647h-1zM361 631h1V664h-1zM601 631h1V647h-1zM548 631h1V664h-1zM1043 631h1V647h-1zM150 631h1V647h-1zM742 631h1V647h-1zM285 647h1V664h-1zM618 647h1V676h-1zM448 647h1V664h-1zM1051 647h1V664h-1zM444 647h2V676h-2zM590 647h1V676h-1zM846 647h1V664h-1zM784 647h1V676h-1zM1012 647h1V690h-1zM169 647h2V664h-2zM645 647h2V664h-2zM921 647h2V690h-2zM733 647h1V664h-1zM778 647h1V676h-1zM101 647h1V664h-1zM119 647h1V664h-1zM609 647h1V664h-1zM267 647h1V664h-1zM624 647h1V664h-1zM364 647h1V664h-1zM915 647h1V664h-1zM485 647h2V676h-2zM1074 647h1V664h-1zM747 647h3V664h-3zM981 647h1V664h-1zM940 647h2V690h-2zM674 647h1V690h-1zM804 647h1V664h-1zM722 664h1V690h-1zM326 664h1V690h-1zM1000 664h1V690h-1zM98 664h1V676h-1zM270 664h1V690h-1zM279 664h1V676h-1zM398 664h1V676h-1zM650 664h2V676h-2zM237 664h1V690h-1zM770 664h2V690h-2zM813 664h1V676h-1zM412 664h1V676h-1zM808 664h1V690h-1zM403 664h1V676h-1zM101 664h1V676h-1zM969 664h1V676h-1zM687 664h1V676h-1zM916 664h1V676h-1zM182 664h1V690h-1zM1016 664h1V676h-1zM1025 664h1V676h-1zM690 664h1V676h-1zM197 664h1V690h-1zM907 664h1V676h-1zM839 664h1V676h-1zM531 664h1V690h-1zM177 664h2V690h-2zM828 664h2V676h-2zM214 664h2V676h-2zM258 664h3V690h-3zM103 664h2V676h-2zM565 664h1V690h-1zM694 676h1V690h-1zM305 676h3V690h-3zM606 676h3V690h-3zM190 676h1V690h-1zM678 676h3V690h-3zM202 676h1V690h-1zM367 676h2V690h-2zM279 676h1V690h-1zM381 676h2V690h-2zM711 676h1V690h-1zM817 676h3V690h-3zM979 676h2V690h-2zM935 676h4V690h-4zM228 676h1V690h-1zM121 676h1V690h-1zM638 676h1V690h-1zM968 676h1V690h-1zM108 676h1V690h-1zM412 676h2V690h-2zM483 676h2V690h-2zM439 676h3V690h-3zM905 676h2V690h-2zM804 676h3V690h-3zM796 676h1V690h-1zM384 676h2V690h-2zM497 676h3V690h-3zM163 676h1V690h-1zM429 676h4V690h-4z"/>
<path shape-rendering="crispEdges" fill="url(#g4b)" d="M140 522h1V580h-1zM724 530h1V555h-1zM227 527h1V551h-1zM331 530h4V555h-4zM741 527h1V580h-1zM407 527h1V618h-1zM786 530h4V555h-4zM617 527h2V605h-2zM298 530h1V555h-1zM559 527h2V551h-2zM684 530h2V555h-2zM994 527h1V568h-1zM501 527h2V551h-2zM693 527h1V551h-1zM933 527h1V568h-1zM918 527h2V568h-2zM771 527h1V580h-1zM816 527h1V551h-1zM610 527h3V551h-3zM110 527h1V551h-1zM97 527h1V551h-1zM532 527h2V568h-2zM185 527h1V551h-1zM268 527h4V551h-4zM625 527h1V568h-1zM689 527h1V580h-1zM791 527h1V568h-1zM799 527h1V580h-1zM832 527h1V551h-1zM632 527h1V568h-1zM695 530h1V555h-1zM326 527h1V605h-1zM273 527h1V580h-1zM734 527h1V580h-1zM452 527h2V551h-2zM527 555h2V618h-2zM696 551h1V568h-1zM945 551h1V605h-1zM787 555h3V584h-3zM943 551h1V568h-1zM1038 551h1V568h-1zM615 555h1V568h-1zM314 551h3V631h-3zM1035 551h2V568h-2zM245 551h1V618h-1zM164 555h1V568h-1zM263 555h2V568h-2zM334 555h2V568h-2zM729 555h2V605h-2zM123 551h3V647h-3zM1052 551h1V568h-1zM833 555h1V568h-1zM581 551h1V580h-1zM864 555h3V605h-3zM1014 551h2V568h-2zM829 551h1V580h-1zM104 568h1V580h-1zM817 568h2V605h-2zM999 568h1V605h-1zM227 568h1V580h-1zM481 568h1V580h-1zM437 568h1V618h-1zM431 568h1V580h-1zM101 568h1V605h-1zM292 568h1V580h-1zM793 568h2V584h-2zM708 568h1V584h-1zM375 568h1V580h-1zM145 568h2V618h-2zM576 568h1V605h-1zM931 568h1V647h-1zM506 568h4V580h-4zM186 568h1V584h-1zM243 568h1V580h-1zM259 568h1V580h-1zM158 568h2V631h-2zM991 568h1V618h-1zM203 568h1V580h-1zM970 568h1V580h-1zM897 580h1V605h-1zM732 580h1V605h-1zM396 580h2V605h-2zM695 605h1V618h-1zM1000 605h1V631h-1zM799 605h1V631h-1zM330 605h1V647h-1zM1010 605h1V618h-1zM864 605h1V618h-1zM894 605h1V618h-1zM854 605h1V618h-1zM688 605h1V618h-1zM383 605h1V631h-1zM618 605h1V631h-1zM488 605h1V618h-1zM297 605h1V631h-1zM841 605h1V647h-1zM720 605h1V676h-1zM966 605h1V618h-1zM220 605h1V618h-1zM1066 618h1V690h-1zM190 618h1V664h-1zM257 618h2V631h-2zM788 618h1V631h-1zM983 618h1V676h-1zM596 618h1V664h-1zM245 618h2V664h-2zM825 618h1V631h-1zM779 618h1V631h-1zM1047 618h1V664h-1zM339 618h2V631h-2zM1028 618h1V631h-1zM512 618h1V676h-1zM713 618h2V647h-2zM692 618h1V631h-1zM886 618h1V647h-1zM286 618h1V631h-1zM830 618h1V664h-1zM399 618h3V664h-3zM106 618h1V631h-1zM203 618h1V631h-1zM571 631h1V647h-1zM503 631h2V647h-2zM173 631h1V647h-1zM873 631h1V647h-1zM99 631h1V647h-1zM745 631h1V647h-1zM106 631h1V647h-1zM164 631h2V647h-2zM944 631h2V690h-2zM160 631h1V647h-1zM279 631h2V647h-2zM461 631h1V690h-1zM145 631h2V676h-2zM580 631h3V647h-3zM1073 631h1V647h-1zM1010 631h1V676h-1zM222 631h1V676h-1zM701 631h2V647h-2zM563 631h2V647h-2zM293 631h2V647h-2zM518 631h2V647h-2zM1078 631h2V690h-2zM1035 647h1V690h-1zM756 647h1V676h-1zM157 647h2V664h-2zM634 647h1V664h-1zM260 647h1V664h-1zM696 647h1V664h-1zM313 647h1V676h-1zM557 647h2V664h-2zM481 647h1V690h-1zM139 647h1V690h-1zM973 647h1V664h-1zM664 647h1V664h-1zM890 647h1V664h-1zM995 647h1V664h-1zM373 647h1V690h-1zM1007 647h1V664h-1zM427 647h1V664h-1zM698 647h1V664h-1zM306 647h1V664h-1zM263 647h1V664h-1zM212 647h1V664h-1zM270 647h1V664h-1zM782 664h1V690h-1zM696 664h1V676h-1zM303 664h3V676h-3zM441 664h1V676h-1zM1004 664h1V690h-1zM1022 664h1V690h-1zM929 664h1V676h-1zM682 664h1V676h-1zM555 664h1V690h-1zM534 664h2V676h-2zM642 664h1V690h-1zM890 664h2V690h-2zM503 664h1V676h-1zM596 664h1V676h-1zM821 664h2V690h-2zM692 664h1V676h-1zM624 664h1V690h-1zM753 664h1V676h-1zM763 664h1V676h-1zM118 664h1V690h-1zM192 664h1V676h-1zM148 664h2V676h-2zM745 664h1V676h-1zM392 664h1V676h-1zM224 676h1V690h-1zM526 676h4V690h-4zM874 676h1V690h-1zM880 676h1V690h-1zM232 676h1V690h-1zM97 676h1V690h-1zM877 676h1V690h-1zM521 676h2V690h-2zM357 676h3V690h-3zM727 676h1V690h-1zM1002 676h1V690h-1zM194 676h1V690h-1zM347 676h1V690h-1zM408 676h1V690h-1zM886 676h1V690h-1zM784 676h2V690h-2zM1043 676h2V690h-2zM928 676h1V690h-1zM908 676h1V690h-1zM852 676h2V690h-2zM763 676h2V690h-2zM207 676h2V690h-2zM652 676h2V690h-2zM349 676h2V690h-2zM538 676h1V690h-1zM742 676h2V690h-2zM397 676h2V690h-2zM112 676h2V690h-2zM169 676h1V690h-1zM145 676h1V690h-1zM902 676h2V690h-2z"/>
<g shape-rendering="crispEdges">
<rect x="136" y="688" width="1" height="2" fill="#555"/>
<rect x="177" y="688" width="1" height="2" fill="#555"/>
<rect x="218" y="688" width="1" height="2" fill="#555"/>
<rect x="259" y="688" width="1" height="2" fill="#555"/>
<rect x="300" y="688" width="1" height="2" fill="#555"/>
<rect x="341" y="688" width="1" height="2" fill="#555"/>
<rect x="382" y="688" width="1" height="2" fill="#555"/>
<rect x="423" y="688" width="1" height="2" fill="#555"/>
<rect x="464" y="688" width="1" height="2" fill="#555"/>
<rect x="505" y="688" width="1" height="2" fill="#555"/>
<rect x="546" y="688" width="1" height="2" fill="#555"/>
<rect x="587" y="688" width="1" height="2" fill="#555"/>
<rect x="628" y="688" width="1" height="2" fill="#555"/>
<rect x="669" y="688" width="1" height="2" fill="#555"/>
<rect x="710" y="688" width="1" height="2" fill="#555"/>
<rect x="751" y="688" width="1" height="2" fill="#555"/>
<rect x="792" y="688" width="1" height="2" fill="#555"/>
<rect x="833" y="688" width="1" height="2" fill="#555"/>
<rect x="874" y="688" width="1" height="2" fill="#555"/>
<rect x="915" y="688" width="1" height="2" fill="#555"/>
<rect x="956" y="688" width="1" height="2" fill="#555"/>
<rect x="997" y="688" width="1" height="2" fill="#555"/>
<rect x="1038" y="688" width="1" height="2" fill="#555"/>
</g>
<path d="M101.3 475.0 L104.5 483.3 L111.3 472.2 L114.7 486.3 L118.3 473.3 L121.7 477.2 L125.0 478.0 L128.3 477.2 L131.7 485.5 L135.5 472.2 L138.7 483.3 L142.5 484.5 L145.8 479.5 L148.3 479.5 L155.0 483.3 L162.5 478.3 L166.7 476.2 L169.7 479.2 L173.0 476.2 L175.8 476.7 L179.5 494.5 L183.3 474.5 L186.7 480.8 L190.0 485.8 L193.7 493.3 L196.7 493.3 L203.3 482.5 L207.5 486.3 L210.8 475.3 L214.2 476.7 L217.8 480.5 L221.7 479.2 L224.2 479.5 L227.5 471.3 L234.5 481.3 L237.5 477.5 L244.2 473.3 L248.3 478.3 L251.7 475.3 L254.2 475.3 L258.3 479.2 L261.7 473.3 L265.8 477.2 L269.2 478.8 L271.7 483.3 L275.8 477.2 L278.3 479.2 L285.3 495.3 L289.2 490.8 L289.5 509.0M295.3 509.0 L295.3 483.3 L299.7 479.5 L302.5 500.3 L306.7 487.5 L309.5 489.2 L309.7 509.0M316.3 509.0 L316.3 497.5 L323.3 497.5 L326.3 482.5 L330.5 490.8 L330.5 509.0M336.7 509.0 L336.7 487.5 L340.5 487.5 L340.5 509.0M347.2 509.0 L347.2 500.8 L350.0 491.7 L357.5 487.5 L360.5 489.5 L364.5 485.3 L367.8 503.3 L371.3 500.0 L374.5 489.5 L376.7 509.0M388.3 509.0 L388.3 488.3 L391.3 488.3 L394.2 490.3 L397.5 509.0 L399.2 509.0 L401.3 499.5 L405.3 496.3 L408.3 503.3 L412.5 486.3 L415.0 490.8 L418.7 479.5 L425.8 492.5 L432.5 500.0 L435.8 487.5 L439.7 496.2 L442.5 485.3 L446.3 500.3 L459.7 481.3 L463.3 492.0 L466.3 493.7 L466.3 509.0M473.3 509.0 L473.3 485.3 L480.3 496.3 L483.7 479.5 L487.2 482.0 L490.3 482.5 L494.2 489.2 L497.5 498.7 L500.5 478.3 L504.2 485.0 L511.2 487.2 L514.5 482.5 L517.5 486.7 L517.5 509.0M524.2 509.0 L524.2 486.3 L527.5 486.3 L531.3 485.0 L535.5 476.3 L538.3 485.8 L538.3 509.0M548.3 509.0 L548.3 487.5 L555.3 485.3 L558.7 477.2 L562.5 490.3 L565.3 482.5 L569.5 488.3 L574.7 509.0M576.7 509.0 L579.5 476.3 L583.3 480.0 L586.3 487.5 L586.7 509.0M599.7 509.0 L603.3 481.2 L606.3 482.5 L613.3 503.3 L620.5 489.5 L620.5 509.0M634.5 509.0 L634.5 493.0M644.2 509.0 L644.5 484.2 L647.5 503.3 L651.7 500.3 L654.5 487.5 L658.3 509.0M660.0 509.0 L664.2 496.3 L668.3 503.3 L671.3 489.2 L675.5 484.5 L678.3 498.7 L681.3 488.3 L685.3 495.0 L688.3 489.5 L688.7 509.0M699.5 509.0 L699.5 499.2 L705.8 485.3 L708.8 485.8 L712.5 491.3 L716.3 487.5 L719.5 496.3 L726.3 486.3 L729.2 485.0 L733.3 470.3 L736.7 480.3 L740.5 478.3 L743.3 479.5 L746.3 479.5 L750.5 476.3 L757.5 480.3 L760.5 489.5 L766.7 478.3 L770.5 474.5 L777.5 478.3 L781.3 502.5 L784.5 474.5 L787.5 489.5 L791.7 473.3 L798.3 494.5 L801.7 488.3 L804.5 484.5 L808.3 472.2 L811.7 487.5 L815.5 497.5 L822.5 480.3 L826.7 482.5 L832.5 484.5 L839.7 478.3 L845.5 486.3 L852.5 477.2 L855.0 487.5 L858.0 509.0 L860.0 509.0 L863.6 479.4 L866.4 488.0 L869.6 483.4 L873.6 490.4 L876.6 472.4 L880.0 475.0 L883.0 481.6 L886.6 493.4 L890.6 480.4 L893.6 494.4 L900.4 476.4 L904.4 479.4 L910.6 476.4 L914.4 492.4 L918.0 473.4 L921.4 473.4 L927.6 494.4 L934.4 479.4 L941.6 473.4 L945.4 483.4 L951.4 476.4 L959.0 483.4 L962.4 484.4 L965.6 481.4 L968.6 485.4 L972.4 482.4 L982.4 497.4 L986.6 481.4 L992.4 478.4 L996.6 488.4 L999.4 476.4 L1003.0 480.4 L1006.0 482.4 L1009.4 493.4 L1016.4 480.4 L1023.6 484.4 L1030.6 471.4 L1037.4 481.4 L1040.4 471.4 L1044.6 483.4 L1050.6 478.4 L1054.6 476.4 L1058.0 479.4 L1061.6 479.4 L1065.0 484.4 L1068.4 478.4 L1071.4 505.4 L1074.6 489.4 L1078.6 488.4" fill="none" stroke="#0000ff" stroke-width="1.1" stroke-linejoin="miter"/>
<g shape-rendering="crispEdges">
<rect x="104" y="488" width="1" height="21" fill="#00ff00"/>
<rect x="200" y="498" width="1" height="11" fill="#00ff00"/>
<rect x="234" y="472" width="1" height="37" fill="#00ff00"/>
<rect x="244" y="496" width="1" height="13" fill="#00ff00"/>
<rect x="295" y="486" width="1" height="23" fill="#00ff00"/>
<rect x="312" y="498" width="1" height="11" fill="#00ff00"/>
<rect x="504" y="501" width="1" height="8" fill="#00ff00"/>
<rect x="582" y="506" width="1" height="3" fill="#00ff00"/>
<rect x="606" y="499" width="1" height="10" fill="#00ff00"/>
<rect x="678" y="476" width="1" height="33" fill="#00ff00"/>
<rect x="722" y="491" width="1" height="18" fill="#00ff00"/>
<rect x="787" y="498" width="1" height="11" fill="#00ff00"/>
<rect x="825" y="498" width="1" height="11" fill="#00ff00"/>
<rect x="900" y="504" width="1" height="5" fill="#00ff00"/>
<rect x="907" y="489" width="1" height="20" fill="#00ff00"/>
<rect x="1027" y="480" width="1" height="29" fill="#00ff00"/>
<rect x="96" y="502" width="1" height="4" fill="#ff0000"/>
<rect x="158" y="508" width="1" height="1" fill="#ff0000"/>
<rect x="177" y="507" width="1" height="2" fill="#ff0000"/>
<rect x="208" y="508" width="1" height="1" fill="#ff0000"/>
<rect x="227" y="507" width="1" height="2" fill="#ff0000"/>
<rect x="252" y="508" width="1" height="1" fill="#ff0000"/>
<rect x="282" y="500" width="1" height="9" fill="#ff0000"/>
<rect x="349" y="506" width="1" height="3" fill="#ff0000"/>
<rect x="404" y="504" width="1" height="5" fill="#ff0000"/>
<rect x="457" y="507" width="1" height="2" fill="#ff0000"/>
<rect x="600" y="504" width="1" height="5" fill="#ff0000"/>
<rect x="682" y="505" width="1" height="4" fill="#ff0000"/>
<rect x="685" y="507" width="1" height="2" fill="#ff0000"/>
<rect x="811" y="507" width="1" height="2" fill="#ff0000"/>
<rect x="862" y="498" width="1" height="11" fill="#ff0000"/>
<rect x="871" y="507" width="1" height="2" fill="#ff0000"/>
<rect x="889" y="505" width="1" height="4" fill="#ff0000"/>
<rect x="933" y="506" width="1" height="3" fill="#ff0000"/>
<rect x="937" y="508" width="1" height="1" fill="#ff0000"/>
<rect x="950" y="507" width="1" height="2" fill="#ff0000"/>
<rect x="956" y="504" width="1" height="5" fill="#ff0000"/>
<rect x="959" y="505" width="1" height="4" fill="#ff0000"/>
<rect x="957" y="504" width="2" height="1" fill="#ff0000"/>
<rect x="968" y="504" width="1" height="5" fill="#ff0000"/>
<rect x="995" y="508" width="1" height="1" fill="#ff0000"/>
<rect x="1015" y="508" width="1" height="1" fill="#ff0000"/>
<rect x="1028" y="507" width="1" height="2" fill="#ff0000"/>
<rect x="95.5" y="420.5" width="985" height="89" fill="none" stroke="#333" stroke-width="1"/>
<rect x="95" y="695" width="986" height="16" fill="#000"/>
<rect x="97" y="696" width="983" height="14" fill="#00ff00"/>
<rect x="274" y="696" width="12" height="14" fill="#000"/>
<rect x="275" y="696" width="10" height="14" fill="#ff0000"/>
<rect x="724" y="696" width="12" height="14" fill="#000"/>
<rect x="725" y="696" width="10" height="14" fill="#ff0000"/>
<rect class="fg" x="136" y="711" width="1" height="4"/>
<rect class="fg" x="177" y="711" width="1" height="4"/>
<rect class="fg" x="218" y="711" width="1" height="8"/>
<rect class="fg" x="259" y="711" width="1" height="4"/>
<rect class="fg" x="300" y="711" width="1" height="4"/>
<rect class="fg" x="341" y="711" width="1" height="8"/>
<rect class="fg" x="382" y="711" width="1" height="4"/>
<rect class="fg" x="423" y="711" width="1" height="4"/>
<rect class="fg" x="464" y="711" width="1" height="8"/>
<rect class="fg" x="505" y="711" width="1" height="4"/>
<rect class="fg" x="546" y="711" width="1" height="4"/>
<rect class="fg" x="587" y="711" width="1" height="8"/>
<rect class="fg" x="628" y="711" width="1" height="4"/>
<rect class="fg" x="669" y="711" width="1" height="4"/>
<rect class="fg" x="710" y="711" width="1" height="8"/>
<rect class="fg" x="751" y="711" width="1" height="4"/>
<rect class="fg" x="792" y="711" width="1" height="4"/>
<rect class="fg" x="833" y="711" width="1" height="8"/>
<rect class="fg" x="874" y="711" width="1" height="4"/>
<rect class="fg" x="915" y="711" width="1" height="4"/>
<rect class="fg" x="956" y="711" width="1" height="8"/>
<rect class="fg" x="997" y="711" width="1" height="4"/>
<rect class="fg" x="1038" y="711" width="1" height="4"/>
<rect class="fg" x="1080" y="711" width="1" height="8"/>
</g>
<text x="217.8" y="734" text-anchor="middle" textLength="36">03:00</text>
<text x="217.8" y="749" text-anchor="middle" textLength="36">10.23</text>
<text x="217.8" y="764" text-anchor="middle" textLength="36">36.16</text>
<text x="217.8" y="779" text-anchor="middle" textLength="36">39.10</text>
<text x="340.9" y="734" text-anchor="middle" textLength="36">06:00</text>
<text x="340.9" y="749" text-anchor="middle" textLength="36">10.26</text>
<text x="340.9" y="764" text-anchor="middle" textLength="36">35.76</text>
<text x="340.9" y="779" text-anchor="middle" textLength="36">38.36</text>
<text x="464.1" y="734" text-anchor="middle" textLength="36">09:00</text>
<text x="464.1" y="749" text-anchor="middle" textLength="36">10.29</text>
<text x="464.1" y="764" text-anchor="middle" textLength="36">35.35</text>
<text x="464.1" y="779" text-anchor="middle" textLength="36">37.63</text>
<text x="587.2" y="734" text-anchor="middle" textLength="36">12:00</text>
<text x="587.2" y="749" text-anchor="middle" textLength="36">10.32</text>
<text x="587.2" y="764" text-anchor="middle" textLength="36">34.93</text>
<text x="587.2" y="779" text-anchor="middle" textLength="36">36.92</text>
<text x="710.3" y="734" text-anchor="middle" textLength="36">15:00</text>
<text x="710.3" y="749" text-anchor="middle" textLength="36">10.35</text>
<text x="710.3" y="764" text-anchor="middle" textLength="36">34.51</text>
<text x="710.3" y="779" text-anchor="middle" textLength="36">36.21</text>
<text x="833.4" y="734" text-anchor="middle" textLength="36">18:00</text>
<text x="833.4" y="749" text-anchor="middle" textLength="36">10.38</text>
<text x="833.4" y="764" text-anchor="middle" textLength="36">34.08</text>
<text x="833.4" y="779" text-anchor="middle" textLength="36">35.52</text>
<text x="956.5" y="734" text-anchor="middle" textLength="36">21:00</text>
<text x="956.5" y="749" text-anchor="middle" textLength="36">10.42</text>
<text x="956.5" y="764" text-anchor="middle" textLength="36">33.64</text>
<text x="956.5" y="779" text-anchor="middle" textLength="36">34.85</text>
<text x="1079.7" y="734" text-anchor="middle" textLength="36">00:00</text>
<text x="1079.7" y="749" text-anchor="middle" textLength="36">10.45</text>
<text x="1079.7" y="764" text-anchor="middle" textLength="36">33.20</text>
<text x="1079.7" y="779" text-anchor="middle" textLength="36">34.18</text>
<text x="1062" y="746" textLength="62">2014-162</text>
<text x="60" y="749" text-anchor="end">LT (hrs)</text>
<text x="60" y="764" text-anchor="end">Rs</text>
<text x="60" y="779" text-anchor="end" textLength="47.5">Dipole L</text>
<text x="79" y="707" text-anchor="end" textLength="50">Sunlight?</text>
<text x="587.5" y="20" text-anchor="middle" textLength="283" style="white-space:pre">LEMMS and CHEMS Particle Pressures  2014:161</text>
<text x="10" y="28" textLength="59.5">CHEMS Pr.</text>
<text x="10" y="210" textLength="58.5">LEMMS Pr.</text>
<text x="9" y="537" textLength="66.5">LEMMS Ions</text>
<text x="50" y="124" text-anchor="middle" textLength="73.5" transform="rotate(-90 50 124)">Energy (keV)</text>
<text x="47" y="320.5" text-anchor="middle" textLength="73.5" transform="rotate(-90 47 320.5)">Energy (keV)</text>
<text x="35" y="466" text-anchor="middle" textLength="69.5" transform="rotate(-90 35 466)">P dyn/cm^2</text>
<text x="50" y="602" text-anchor="middle" textLength="73.5" transform="rotate(-90 50 602)">Energy (keV)</text>
<text x="59.6" y="72" textLength="15">10</text>
<text x="74.8" y="66">2</text>
<text x="59.6" y="169" textLength="15">10</text>
<text x="74.8" y="163">1</text>
<text x="82.3" y="344" text-anchor="end" textLength="27.4">100.</text>
<text x="82.3" y="305" text-anchor="end" textLength="27.4">200.</text>
<text x="82.3" y="282" text-anchor="end" textLength="27.4">300.</text>
<text x="82.3" y="266" text-anchor="end" textLength="27.4">400.</text>
<text x="82.3" y="253" text-anchor="end" textLength="27.4">500.</text>
<text x="82.3" y="243" text-anchor="end" textLength="27.4">600.</text>
<text x="82.3" y="234" text-anchor="end" textLength="27.4">700.</text>
<text x="52.2" y="444" textLength="15">10</text>
<text transform="translate(67.8 438) scale(1.6 1)">-</text>
<text x="75.2" y="438">9</text>
<text x="45.2" y="466" textLength="15">10</text>
<text transform="translate(60.8 460) scale(1.6 1)">-</text>
<text x="68.2" y="460" textLength="15.0">10</text>
<text x="45.2" y="488" textLength="15">10</text>
<text transform="translate(60.8 482) scale(1.6 1)">-</text>
<text x="68.2" y="482" textLength="15.0">11</text>
<text x="45.2" y="510" textLength="15">10</text>
<text transform="translate(60.8 504) scale(1.6 1)">-</text>
<text x="68.2" y="504" textLength="15.0">12</text>
<text x="59.6" y="562" textLength="15">10</text>
<text x="74.8" y="556">4</text>
<text x="59.6" y="614" textLength="15">10</text>
<text x="74.8" y="608">3</text>
<text x="59.6" y="667" textLength="15">10</text>
<text x="74.8" y="661">2</text>
<g shape-rendering="crispEdges">
<rect x="1092" y="30" width="12" height="191" fill="url(#cb1)"/>
<rect x="1092" y="220" width="12" height="1" fill="#000"/>
<rect class="fg" x="1104" y="29" width="1" height="192"/>
<rect x="1092" y="226" width="12" height="191" fill="url(#cb2)"/>
<rect x="1092" y="416" width="12" height="1" fill="#000"/>
<rect class="fg" x="1104" y="225" width="1" height="192"/>
<rect x="1092" y="515" width="12" height="177" fill="url(#cb3)"/>
<rect x="1092" y="691" width="12" height="1" fill="#000"/>
<rect class="fg" x="1104" y="514" width="1" height="178"/>
<rect class="fg" x="1105" y="219" width="4" height="1"/>
<rect class="fg" x="1105" y="215" width="4" height="1"/>
<rect class="fg" x="1105" y="211" width="4" height="1"/>
<rect class="fg" x="1105" y="207" width="4" height="1"/>
<rect class="fg" x="1105" y="204" width="4" height="1"/>
<rect class="fg" x="1105" y="202" width="8" height="1"/>
<rect class="fg" x="1105" y="184" width="4" height="1"/>
<rect class="fg" x="1105" y="174" width="4" height="1"/>
<rect class="fg" x="1105" y="167" width="4" height="1"/>
<rect class="fg" x="1105" y="161" width="4" height="1"/>
<rect class="fg" x="1105" y="157" width="4" height="1"/>
<rect class="fg" x="1105" y="153" width="4" height="1"/>
<rect class="fg" x="1105" y="150" width="4" height="1"/>
<rect class="fg" x="1105" y="147" width="4" height="1"/>
<rect class="fg" x="1105" y="144" width="8" height="1"/>
<rect class="fg" x="1105" y="127" width="4" height="1"/>
<rect class="fg" x="1105" y="117" width="4" height="1"/>
<rect class="fg" x="1105" y="109" width="4" height="1"/>
<rect class="fg" x="1105" y="104" width="4" height="1"/>
<rect class="fg" x="1105" y="99" width="4" height="1"/>
<rect class="fg" x="1105" y="95" width="4" height="1"/>
<rect class="fg" x="1105" y="92" width="4" height="1"/>
<rect class="fg" x="1105" y="89" width="4" height="1"/>
<rect class="fg" x="1105" y="86" width="8" height="1"/>
<rect class="fg" x="1105" y="69" width="4" height="1"/>
<rect class="fg" x="1105" y="59" width="4" height="1"/>
<rect class="fg" x="1105" y="52" width="4" height="1"/>
<rect class="fg" x="1105" y="46" width="4" height="1"/>
<rect class="fg" x="1105" y="42" width="4" height="1"/>
<rect class="fg" x="1105" y="38" width="4" height="1"/>
<rect class="fg" x="1105" y="34" width="4" height="1"/>
<rect class="fg" x="1105" y="31" width="4" height="1"/>
<rect class="fg" x="1105" y="29" width="8" height="1"/>
<rect class="fg" x="1105" y="415" width="4" height="1"/>
<rect class="fg" x="1105" y="411" width="4" height="1"/>
<rect class="fg" x="1105" y="407" width="4" height="1"/>
<rect class="fg" x="1105" y="403" width="4" height="1"/>
<rect class="fg" x="1105" y="400" width="4" height="1"/>
<rect class="fg" x="1105" y="398" width="8" height="1"/>
<rect class="fg" x="1105" y="380" width="4" height="1"/>
<rect class="fg" x="1105" y="370" width="4" height="1"/>
<rect class="fg" x="1105" y="363" width="4" height="1"/>
<rect class="fg" x="1105" y="357" width="4" height="1"/>
<rect class="fg" x="1105" y="353" width="4" height="1"/>
<rect class="fg" x="1105" y="349" width="4" height="1"/>
<rect class="fg" x="1105" y="346" width="4" height="1"/>
<rect class="fg" x="1105" y="343" width="4" height="1"/>
<rect class="fg" x="1105" y="340" width="8" height="1"/>
<rect class="fg" x="1105" y="323" width="4" height="1"/>
<rect class="fg" x="1105" y="313" width="4" height="1"/>
<rect class="fg" x="1105" y="305" width="4" height="1"/>
<rect class="fg" x="1105" y="300" width="4" height="1"/>
<rect class="fg" x="1105" y="295" width="4" height="1"/>
<rect class="fg" x="1105" y="291" width="4" height="1"/>
<rect class="fg" x="1105" y="288" width="4" height="1"/>
<rect class="fg" x="1105" y="285" width="4" height="1"/>
<rect class="fg" x="1105" y="282" width="8" height="1"/>
<rect class="fg" x="1105" y="265" width="4" height="1"/>
<rect class="fg" x="1105" y="255" width="4" height="1"/>
<rect class="fg" x="1105" y="248" width="4" height="1"/>
<rect class="fg" x="1105" y="242" width="4" height="1"/>
<rect class="fg" x="1105" y="238" width="4" height="1"/>
<rect class="fg" x="1105" y="234" width="4" height="1"/>
<rect class="fg" x="1105" y="230" width="4" height="1"/>
<rect class="fg" x="1105" y="227" width="4" height="1"/>
<rect class="fg" x="1105" y="225" width="8" height="1"/>
<rect class="fg" x="1105" y="515" width="8" height="1"/>
<rect class="fg" x="1105" y="535" width="4" height="1"/>
<rect class="fg" x="1105" y="554" width="8" height="1"/>
<rect class="fg" x="1105" y="574" width="4" height="1"/>
<rect class="fg" x="1105" y="593" width="8" height="1"/>
<rect class="fg" x="1105" y="613" width="4" height="1"/>
<rect class="fg" x="1105" y="632" width="8" height="1"/>
<rect class="fg" x="1105" y="652" width="4" height="1"/>
<rect class="fg" x="1105" y="671" width="8" height="1"/>
<rect class="fg" x="1105" y="691" width="4" height="1"/>
</g>
<text x="1116.6" y="37" textLength="15">10</text>
<text transform="translate(1132.2 31) scale(1.6 1)">-</text>
<text x="1139.6" y="31">9</text>
<text x="1116.6" y="94" textLength="15">10</text>
<text transform="translate(1132.2 88) scale(1.6 1)">-</text>
<text x="1139.6" y="88" textLength="15.0">10</text>
<text x="1116.6" y="152" textLength="15">10</text>
<text transform="translate(1132.2 146) scale(1.6 1)">-</text>
<text x="1139.6" y="146" textLength="15.0">11</text>
<text x="1116.6" y="210" textLength="15">10</text>
<text transform="translate(1132.2 204) scale(1.6 1)">-</text>
<text x="1139.6" y="204" textLength="15.0">12</text>
<text x="1116.6" y="233" textLength="15">10</text>
<text transform="translate(1132.2 227) scale(1.6 1)">-</text>
<text x="1139.6" y="227">9</text>
<text x="1116.6" y="290" textLength="15">10</text>
<text transform="translate(1132.2 284) scale(1.6 1)">-</text>
<text x="1139.6" y="284" textLength="15.0">10</text>
<text x="1116.6" y="348" textLength="15">10</text>
<text transform="translate(1132.2 342) scale(1.6 1)">-</text>
<text x="1139.6" y="342" textLength="15.0">11</text>
<text x="1116.6" y="406" textLength="15">10</text>
<text transform="translate(1132.2 400) scale(1.6 1)">-</text>
<text x="1139.6" y="400" textLength="15.0">12</text>
<text x="1116.6" y="523" textLength="15">10</text>
<text x="1131.8" y="517">4</text>
<text x="1116.6" y="562" textLength="15">10</text>
<text x="1131.8" y="556">2</text>
<text x="1116.6" y="601" textLength="15">10</text>
<text x="1131.8" y="595">0</text>
<text x="1116.6" y="640" textLength="15">10</text>
<text transform="translate(1132.2 634) scale(1.6 1)">-</text>
<text x="1139.6" y="634">2</text>
<text x="1116.6" y="679" textLength="15">10</text>
<text transform="translate(1132.2 673) scale(1.6 1)">-</text>
<text x="1139.6" y="673">4</text>
<text x="1164.5" y="123" text-anchor="middle" textLength="122" transform="rotate(90 1164.5 123)">pressure dyne/cm^2</text>
<text x="1164.5" y="319" text-anchor="middle" textLength="122" transform="rotate(90 1164.5 319)">pressure dyne/cm^2</text>
<text x="1155" y="602" text-anchor="middle" textLength="169" transform="rotate(90 1155 602)">intensity 1/(s cm^2 ster keV)</text>
<line x1="1091" y1="426" x2="1103" y2="431" stroke="#0000ff" stroke-width="1.2"/>
<text x="1107" y="432.5" textLength="54">CHEMS-P</text>
<line x1="1091" y1="441" x2="1103" y2="446" stroke="#ff0000" stroke-width="1.2"/>
<text x="1107" y="447.5" textLength="53.5">LEMMS-P</text>
<line x1="1091" y1="456" x2="1103" y2="461" stroke="#00ff00" stroke-width="1.2"/>
<text x="1107" y="462.5" textLength="56">CHEMS-O</text>
<g shape-rendering="crispEdges">
<rect x="215.5" y="802.5" width="151" height="148" fill="#fff" stroke="#333"/>
<rect class="fg" x="207" y="803" width="8" height="1"/>
<rect class="fg" x="211" y="805" width="4" height="1"/>
<rect class="fg" x="211" y="807" width="4" height="1"/>
<rect class="fg" x="211" y="808" width="4" height="1"/>
<rect class="fg" x="211" y="810" width="4" height="1"/>
<rect class="fg" x="211" y="812" width="4" height="1"/>
<rect class="fg" x="211" y="814" width="4" height="1"/>
<rect class="fg" x="211" y="816" width="4" height="1"/>
<rect class="fg" x="211" y="818" width="4" height="1"/>
<rect class="fg" x="211" y="819" width="4" height="1"/>
<rect class="fg" x="207" y="821" width="8" height="1"/>
<rect class="fg" x="211" y="823" width="4" height="1"/>
<rect class="fg" x="211" y="825" width="4" height="1"/>
<rect class="fg" x="211" y="827" width="4" height="1"/>
<rect class="fg" x="211" y="828" width="4" height="1"/>
<rect class="fg" x="211" y="830" width="4" height="1"/>
<rect class="fg" x="211" y="832" width="4" height="1"/>
<rect class="fg" x="211" y="834" width="4" height="1"/>
<rect class="fg" x="211" y="836" width="4" height="1"/>
<rect class="fg" x="211" y="838" width="4" height="1"/>
<rect class="fg" x="207" y="839" width="8" height="1"/>
<rect class="fg" x="211" y="841" width="4" height="1"/>
<rect class="fg" x="211" y="843" width="4" height="1"/>
<rect class="fg" x="211" y="845" width="4" height="1"/>
<rect class="fg" x="211" y="847" width="4" height="1"/>
<rect class="fg" x="211" y="849" width="4" height="1"/>
<rect class="fg" x="211" y="850" width="4" height="1"/>
<rect class="fg" x="211" y="852" width="4" height="1"/>
<rect class="fg" x="211" y="854" width="4" height="1"/>
<rect class="fg" x="211" y="856" width="4" height="1"/>
<rect class="fg" x="207" y="858" width="8" height="1"/>
<rect class="fg" x="211" y="859" width="4" height="1"/>
<rect class="fg" x="211" y="861" width="4" height="1"/>
<rect class="fg" x="211" y="863" width="4" height="1"/>
<rect class="fg" x="211" y="865" width="4" height="1"/>
<rect class="fg" x="211" y="867" width="4" height="1"/>
<rect class="fg" x="211" y="869" width="4" height="1"/>
<rect class="fg" x="211" y="870" width="4" height="1"/>
<rect class="fg" x="211" y="872" width="4" height="1"/>
<rect class="fg" x="211" y="874" width="4" height="1"/>
<rect class="fg" x="207" y="876" width="8" height="1"/>
<rect class="fg" x="211" y="878" width="4" height="1"/>
<rect class="fg" x="211" y="880" width="4" height="1"/>
<rect class="fg" x="211" y="881" width="4" height="1"/>
<rect class="fg" x="211" y="883" width="4" height="1"/>
<rect class="fg" x="211" y="885" width="4" height="1"/>
<rect class="fg" x="211" y="887" width="4" height="1"/>
<rect class="fg" x="211" y="889" width="4" height="1"/>
<rect class="fg" x="211" y="891" width="4" height="1"/>
<rect class="fg" x="211" y="892" width="4" height="1"/>
<rect class="fg" x="207" y="894" width="8" height="1"/>
<rect class="fg" x="211" y="896" width="4" height="1"/>
<rect class="fg" x="211" y="898" width="4" height="1"/>
<rect class="fg" x="211" y="900" width="4" height="1"/>
<rect class="fg" x="211" y="901" width="4" height="1"/>
<rect class="fg" x="211" y="903" width="4" height="1"/>
<rect class="fg" x="211" y="905" width="4" height="1"/>
<rect class="fg" x="211" y="907" width="4" height="1"/>
<rect class="fg" x="211" y="909" width="4" height="1"/>
<rect class="fg" x="211" y="911" width="4" height="1"/>
<rect class="fg" x="207" y="912" width="8" height="1"/>
<rect class="fg" x="211" y="914" width="4" height="1"/>
<rect class="fg" x="211" y="916" width="4" height="1"/>
<rect class="fg" x="211" y="918" width="4" height="1"/>
<rect class="fg" x="211" y="920" width="4" height="1"/>
<rect class="fg" x="211" y="922" width="4" height="1"/>
<rect class="fg" x="211" y="923" width="4" height="1"/>
<rect class="fg" x="211" y="925" width="4" height="1"/>
<rect class="fg" x="211" y="927" width="4" height="1"/>
<rect class="fg" x="211" y="929" width="4" height="1"/>
<rect class="fg" x="207" y="931" width="8" height="1"/>
<rect class="fg" x="211" y="932" width="4" height="1"/>
<rect class="fg" x="211" y="934" width="4" height="1"/>
<rect class="fg" x="211" y="936" width="4" height="1"/>
<rect class="fg" x="211" y="938" width="4" height="1"/>
<rect class="fg" x="211" y="940" width="4" height="1"/>
<rect class="fg" x="211" y="942" width="4" height="1"/>
<rect class="fg" x="211" y="943" width="4" height="1"/>
<rect class="fg" x="211" y="945" width="4" height="1"/>
<rect class="fg" x="211" y="947" width="4" height="1"/>
<rect class="fg" x="207" y="949" width="8" height="1"/>
<rect class="fg" x="216" y="951" width="1" height="8"/>
<rect class="fg" x="234" y="951" width="1" height="4"/>
<rect class="fg" x="253" y="951" width="1" height="8"/>
<rect class="fg" x="272" y="951" width="1" height="4"/>
<rect class="fg" x="290" y="951" width="1" height="8"/>
<rect class="fg" x="309" y="951" width="1" height="4"/>
<rect class="fg" x="328" y="951" width="1" height="8"/>
<rect class="fg" x="347" y="951" width="1" height="4"/>
<rect class="fg" x="365" y="951" width="1" height="8"/>
</g>
<text x="202.7" y="808.0" text-anchor="end" textLength="19.7">40.</text>
<text transform="translate(175.6 808.0) scale(1.6 1)">-</text>
<text x="202.7" y="826.2" text-anchor="end" textLength="19.7">30.</text>
<text transform="translate(175.6 826.2) scale(1.6 1)">-</text>
<text x="202.7" y="844.5" text-anchor="end" textLength="19.7">20.</text>
<text transform="translate(175.6 844.5) scale(1.6 1)">-</text>
<text x="202.7" y="862.8" text-anchor="end" textLength="19.7">10.</text>
<text transform="translate(175.6 862.8) scale(1.6 1)">-</text>
<text x="202.7" y="881.0" text-anchor="end" textLength="11.7">0.</text>
<text x="202.7" y="899.2" text-anchor="end" textLength="19.7">10.</text>
<text x="202.7" y="917.5" text-anchor="end" textLength="19.7">20.</text>
<text x="202.7" y="935.8" text-anchor="end" textLength="19.7">30.</text>
<text x="202.7" y="954.0" text-anchor="end" textLength="19.7">40.</text>
<text x="216.3" y="974" text-anchor="middle" textLength="19.7">40.</text>
<text x="253.7" y="974" text-anchor="middle" textLength="19.7">20.</text>
<text x="291.1" y="974" text-anchor="middle" textLength="11.7">0.</text>
<text transform="translate(314.7 974) scale(1.6 1)">-</text>
<text x="322.1" y="974" textLength="19.7">20.</text>
<text transform="translate(352.1 974) scale(1.6 1)">-</text>
<text x="359.5" y="974" textLength="19.7">40.</text>
<text x="291.0" y="992" text-anchor="middle">KSM-X</text>
<text x="167" y="877" text-anchor="middle" transform="rotate(-90 167 877)">KSM-Y</text>
<clipPath id="ca"><rect x="216" y="803" width="150" height="147"/></clipPath>
<g clip-path="url(#ca)" fill="none">
<path d="M248.8 802.0C248.0 803.3 245.8 807.2 244.2 810.0C242.7 812.8 241.0 815.6 239.3 819.0C237.7 822.4 235.9 826.4 234.3 830.2C232.8 834.1 231.1 838.6 229.8 842.4C228.6 846.2 227.4 849.9 226.7 853.2C225.9 856.5 225.6 858.9 225.3 862.2C225.1 865.5 225.1 869.0 225.1 873.0C225.1 877.0 225.3 882.2 225.6 886.5C225.9 890.8 226.3 894.9 227.2 899.0C228.0 903.1 229.2 907.0 230.5 911.0C231.8 915.0 233.3 919.0 235.0 923.0C236.7 927.0 238.2 930.3 240.5 935.0C242.8 939.7 247.2 948.3 248.5 951.0" stroke="#0000ff" stroke-width="1.25" stroke-dasharray="2.2 1.6"/>
<path d="M284.4 802.0C282.9 803.3 279.1 806.3 275.3 810.0C271.5 813.7 265.4 820.4 261.8 824.4C258.2 828.4 255.9 830.8 253.7 834.3C251.4 837.8 249.8 841.6 248.3 845.1C246.8 848.6 245.7 851.1 244.7 855.0C243.7 858.9 242.8 864.3 242.4 868.5C242.1 872.7 242.2 876.5 242.4 880.2C242.7 884.0 243.3 887.7 243.8 891.0C244.3 894.3 244.7 896.7 245.6 900.0C246.5 903.3 247.9 907.3 249.5 911.0C251.1 914.7 252.9 918.5 255.0 922.0C257.1 925.5 259.4 928.8 262.0 932.0C264.6 935.2 267.2 937.8 270.5 941.0C273.8 944.2 279.7 949.3 281.5 951.0" stroke="#8b4513" stroke-width="1.25" stroke-dasharray="2.2 1.6"/>
<ellipse cx="292" cy="877.8" rx="35.1" ry="37.4" stroke="#000" stroke-width="1.4"/>
<ellipse cx="291.5" cy="876.8" rx="2.3" ry="1.5" stroke="#000" stroke-width="1"/>
<path d="M272.6 888.5C271.4 887.8 268.1 885.9 265.4 884.3C262.7 882.7 258.8 880.5 256.4 878.9C254.0 877.2 253.2 876.7 251.0 874.4C248.8 872.1 245.2 868.0 242.9 864.9C240.7 861.8 238.9 858.6 237.5 855.9C236.1 853.2 235.2 851.1 234.4 848.7C233.6 846.3 232.9 844.2 232.6 841.5C232.2 838.8 232.1 835.0 232.3 832.5C232.5 830.0 233.2 827.9 233.9 826.2C234.6 824.5 235.9 823.1 236.6 822.2C237.3 821.3 237.8 821.2 238.0 821.0" stroke="#000" stroke-width="1.4"/>
<path d="M232.8 844 L235.7 851.9" stroke="#0000ff" stroke-width="4.5" stroke-linecap="round"/>
<path d="M228.6 839.5l8 8m0 -8l-8 8" stroke="#ff0000" stroke-width="1"/>
<rect x="254.1" y="876.6" width="4.7" height="4.7" rx="1.5" fill="#ff0000"/>
</g>
<g shape-rendering="crispEdges">
<rect x="509.5" y="802.5" width="151" height="148" fill="#fff" stroke="#333"/>
<rect class="fg" x="501" y="803" width="8" height="1"/>
<rect class="fg" x="505" y="805" width="4" height="1"/>
<rect class="fg" x="505" y="807" width="4" height="1"/>
<rect class="fg" x="505" y="808" width="4" height="1"/>
<rect class="fg" x="505" y="810" width="4" height="1"/>
<rect class="fg" x="505" y="812" width="4" height="1"/>
<rect class="fg" x="505" y="814" width="4" height="1"/>
<rect class="fg" x="505" y="816" width="4" height="1"/>
<rect class="fg" x="505" y="818" width="4" height="1"/>
<rect class="fg" x="505" y="819" width="4" height="1"/>
<rect class="fg" x="501" y="821" width="8" height="1"/>
<rect class="fg" x="505" y="823" width="4" height="1"/>
<rect class="fg" x="505" y="825" width="4" height="1"/>
<rect class="fg" x="505" y="827" width="4" height="1"/>
<rect class="fg" x="505" y="828" width="4" height="1"/>
<rect class="fg" x="505" y="830" width="4" height="1"/>
<rect class="fg" x="505" y="832" width="4" height="1"/>
<rect class="fg" x="505" y="834" width="4" height="1"/>
<rect class="fg" x="505" y="836" width="4" height="1"/>
<rect class="fg" x="505" y="838" width="4" height="1"/>
<rect class="fg" x="501" y="839" width="8" height="1"/>
<rect class="fg" x="505" y="841" width="4" height="1"/>
<rect class="fg" x="505" y="843" width="4" height="1"/>
<rect class="fg" x="505" y="845" width="4" height="1"/>
<rect class="fg" x="505" y="847" width="4" height="1"/>
<rect class="fg" x="505" y="849" width="4" height="1"/>
<rect class="fg" x="505" y="850" width="4" height="1"/>
<rect class="fg" x="505" y="852" width="4" height="1"/>
<rect class="fg" x="505" y="854" width="4" height="1"/>
<rect class="fg" x="505" y="856" width="4" height="1"/>
<rect class="fg" x="501" y="858" width="8" height="1"/>
<rect class="fg" x="505" y="859" width="4" height="1"/>
<rect class="fg" x="505" y="861" width="4" height="1"/>
<rect class="fg" x="505" y="863" width="4" height="1"/>
<rect class="fg" x="505" y="865" width="4" height="1"/>
<rect class="fg" x="505" y="867" width="4" height="1"/>
<rect class="fg" x="505" y="869" width="4" height="1"/>
<rect class="fg" x="505" y="870" width="4" height="1"/>
<rect class="fg" x="505" y="872" width="4" height="1"/>
<rect class="fg" x="505" y="874" width="4" height="1"/>
<rect class="fg" x="501" y="876" width="8" height="1"/>
<rect class="fg" x="505" y="878" width="4" height="1"/>
<rect class="fg" x="505" y="880" width="4" height="1"/>
<rect class="fg" x="505" y="881" width="4" height="1"/>
<rect class="fg" x="505" y="883" width="4" height="1"/>
<rect class="fg" x="505" y="885" width="4" height="1"/>
<rect class="fg" x="505" y="887" width="4" height="1"/>
<rect class="fg" x="505" y="889" width="4" height="1"/>
<rect class="fg" x="505" y="891" width="4" height="1"/>
<rect class="fg" x="505" y="892" width="4" height="1"/>
<rect class="fg" x="501" y="894" width="8" height="1"/>
<rect class="fg" x="505" y="896" width="4" height="1"/>
<rect class="fg" x="505" y="898" width="4" height="1"/>
<rect class="fg" x="505" y="900" width="4" height="1"/>
<rect class="fg" x="505" y="901" width="4" height="1"/>
<rect class="fg" x="505" y="903" width="4" height="1"/>
<rect class="fg" x="505" y="905" width="4" height="1"/>
<rect class="fg" x="505" y="907" width="4" height="1"/>
<rect class="fg" x="505" y="909" width="4" height="1"/>
<rect class="fg" x="505" y="911" width="4" height="1"/>
<rect class="fg" x="501" y="912" width="8" height="1"/>
<rect class="fg" x="505" y="914" width="4" height="1"/>
<rect class="fg" x="505" y="916" width="4" height="1"/>
<rect class="fg" x="505" y="918" width="4" height="1"/>
<rect class="fg" x="505" y="920" width="4" height="1"/>
<rect class="fg" x="505" y="922" width="4" height="1"/>
<rect class="fg" x="505" y="923" width="4" height="1"/>
<rect class="fg" x="505" y="925" width="4" height="1"/>
<rect class="fg" x="505" y="927" width="4" height="1"/>
<rect class="fg" x="505" y="929" width="4" height="1"/>
<rect class="fg" x="501" y="931" width="8" height="1"/>
<rect class="fg" x="505" y="932" width="4" height="1"/>
<rect class="fg" x="505" y="934" width="4" height="1"/>
<rect class="fg" x="505" y="936" width="4" height="1"/>
<rect class="fg" x="505" y="938" width="4" height="1"/>
<rect class="fg" x="505" y="940" width="4" height="1"/>
<rect class="fg" x="505" y="942" width="4" height="1"/>
<rect class="fg" x="505" y="943" width="4" height="1"/>
<rect class="fg" x="505" y="945" width="4" height="1"/>
<rect class="fg" x="505" y="947" width="4" height="1"/>
<rect class="fg" x="501" y="949" width="8" height="1"/>
<rect class="fg" x="510" y="951" width="1" height="8"/>
<rect class="fg" x="528" y="951" width="1" height="4"/>
<rect class="fg" x="547" y="951" width="1" height="8"/>
<rect class="fg" x="566" y="951" width="1" height="4"/>
<rect class="fg" x="584" y="951" width="1" height="8"/>
<rect class="fg" x="603" y="951" width="1" height="4"/>
<rect class="fg" x="622" y="951" width="1" height="8"/>
<rect class="fg" x="641" y="951" width="1" height="4"/>
<rect class="fg" x="659" y="951" width="1" height="8"/>
</g>
<text x="496.7" y="808.0" text-anchor="end" textLength="19.7">40.</text>
<text x="496.7" y="826.2" text-anchor="end" textLength="19.7">30.</text>
<text x="496.7" y="844.5" text-anchor="end" textLength="19.7">20.</text>
<text x="496.7" y="862.8" text-anchor="end" textLength="19.7">10.</text>
<text x="496.7" y="881.0" text-anchor="end" textLength="11.7">0.</text>
<text x="496.7" y="899.2" text-anchor="end" textLength="19.7">10.</text>
<text transform="translate(469.6 899.2) scale(1.6 1)">-</text>
<text x="496.7" y="917.5" text-anchor="end" textLength="19.7">20.</text>
<text transform="translate(469.6 917.5) scale(1.6 1)">-</text>
<text x="496.7" y="935.8" text-anchor="end" textLength="19.7">30.</text>
<text transform="translate(469.6 935.8) scale(1.6 1)">-</text>
<text x="496.7" y="954.0" text-anchor="end" textLength="19.7">40.</text>
<text transform="translate(469.6 954.0) scale(1.6 1)">-</text>
<text x="510.3" y="974" text-anchor="middle" textLength="19.7">40.</text>
<text x="547.7" y="974" text-anchor="middle" textLength="19.7">20.</text>
<text x="585.0" y="974" text-anchor="middle" textLength="11.7">0.</text>
<text transform="translate(608.7 974) scale(1.6 1)">-</text>
<text x="616.1" y="974" textLength="19.7">20.</text>
<text transform="translate(646.1 974) scale(1.6 1)">-</text>
<text x="653.5" y="974" textLength="19.7">40.</text>
<text x="585.0" y="992" text-anchor="middle">KSM-X</text>
<text x="461" y="877" text-anchor="middle" transform="rotate(-90 461 877)">KSM-Z</text>
<clipPath id="cb"><rect x="510" y="803" width="150" height="147"/></clipPath>
<g clip-path="url(#cb)" fill="none">
<path d="M542.0 802.0C540.8 804.3 537.2 811.3 535.0 816.0C532.8 820.7 530.6 825.0 528.5 830.0C526.4 835.0 524.0 840.7 522.5 846.0C521.0 851.3 520.1 857.2 519.5 862.0C518.9 866.8 519.0 870.3 519.0 875.0C519.0 879.7 519.0 885.5 519.5 890.0C520.0 894.5 521.2 898.7 522.0 902.0C522.8 905.3 523.0 906.7 524.0 910.0C525.0 913.3 526.4 917.8 528.0 922.0C529.6 926.2 531.2 930.2 533.5 935.0C535.8 939.8 540.6 948.3 542.0 951.0" stroke="#0000ff" stroke-width="1.25" stroke-dasharray="2.2 1.6"/>
<path d="M578.0 802.0C575.8 804.2 569.4 810.3 565.0 815.0C560.6 819.7 555.0 825.7 551.5 830.0C548.0 834.3 546.1 837.0 544.0 841.0C541.9 845.0 540.2 849.5 539.0 854.0C537.8 858.5 537.0 863.7 536.5 868.0C536.0 872.3 536.0 876.0 536.2 880.0C536.5 884.0 537.2 888.2 538.0 892.0C538.8 895.8 540.0 900.0 541.0 903.0C542.0 906.0 542.5 907.0 544.0 910.0C545.5 913.0 547.7 917.3 550.0 921.0C552.3 924.7 555.3 928.7 558.0 932.0C560.7 935.3 562.9 937.8 566.0 941.0C569.1 944.2 574.8 949.3 576.5 951.0" stroke="#8b4513" stroke-width="1.25" stroke-dasharray="2.2 1.6"/>
<path d="M547.5 891.6 L622.3 862" stroke="#000" stroke-width="2.2"/>
<ellipse cx="585" cy="877" rx="3.2" ry="1.3" transform="rotate(-21.5 585 877)" stroke="#000" fill="#fff" stroke-width="1"/>
<path d="M567.0 897.5C565.7 897.3 561.8 897.1 559.0 896.2C556.2 895.3 553.3 893.5 550.5 892.0C547.7 890.5 544.6 889.2 542.0 887.5C539.4 885.8 537.0 883.6 535.0 881.5C533.0 879.4 531.4 877.7 530.0 875.0C528.6 872.3 527.1 868.8 526.5 865.5C525.9 862.2 526.0 857.9 526.2 855.0C526.4 852.1 526.6 850.4 527.5 848.0C528.4 845.6 530.8 841.8 531.5 840.5" stroke="#000" stroke-width="1.4"/>
<path d="M526.7 866.2 L529.5 873.8" stroke="#0000ff" stroke-width="4.5" stroke-linecap="round"/>
<path d="M522.5 861.5l8 8m0 -8l-8 8" stroke="#ff0000" stroke-width="1"/>
<circle cx="550.5" cy="890.5" r="2.7" fill="#ff0000"/>
</g>
<g shape-rendering="crispEdges">
<rect x="803.5" y="802.5" width="151" height="148" fill="#fff" stroke="#333"/>
<rect class="fg" x="795" y="803" width="8" height="1"/>
<rect class="fg" x="799" y="805" width="4" height="1"/>
<rect class="fg" x="799" y="807" width="4" height="1"/>
<rect class="fg" x="799" y="808" width="4" height="1"/>
<rect class="fg" x="799" y="810" width="4" height="1"/>
<rect class="fg" x="799" y="812" width="4" height="1"/>
<rect class="fg" x="799" y="814" width="4" height="1"/>
<rect class="fg" x="799" y="816" width="4" height="1"/>
<rect class="fg" x="799" y="818" width="4" height="1"/>
<rect class="fg" x="799" y="819" width="4" height="1"/>
<rect class="fg" x="795" y="821" width="8" height="1"/>
<rect class="fg" x="799" y="823" width="4" height="1"/>
<rect class="fg" x="799" y="825" width="4" height="1"/>
<rect class="fg" x="799" y="827" width="4" height="1"/>
<rect class="fg" x="799" y="828" width="4" height="1"/>
<rect class="fg" x="799" y="830" width="4" height="1"/>
<rect class="fg" x="799" y="832" width="4" height="1"/>
<rect class="fg" x="799" y="834" width="4" height="1"/>
<rect class="fg" x="799" y="836" width="4" height="1"/>
<rect class="fg" x="799" y="838" width="4" height="1"/>
<rect class="fg" x="795" y="839" width="8" height="1"/>
<rect class="fg" x="799" y="841" width="4" height="1"/>
<rect class="fg" x="799" y="843" width="4" height="1"/>
<rect class="fg" x="799" y="845" width="4" height="1"/>
<rect class="fg" x="799" y="847" width="4" height="1"/>
<rect class="fg" x="799" y="849" width="4" height="1"/>
<rect class="fg" x="799" y="850" width="4" height="1"/>
<rect class="fg" x="799" y="852" width="4" height="1"/>
<rect class="fg" x="799" y="854" width="4" height="1"/>
<rect class="fg" x="799" y="856" width="4" height="1"/>
<rect class="fg" x="795" y="858" width="8" height="1"/>
<rect class="fg" x="799" y="859" width="4" height="1"/>
<rect class="fg" x="799" y="861" width="4" height="1"/>
<rect class="fg" x="799" y="863" width="4" height="1"/>
<rect class="fg" x="799" y="865" width="4" height="1"/>
<rect class="fg" x="799" y="867" width="4" height="1"/>
<rect class="fg" x="799" y="869" width="4" height="1"/>
<rect class="fg" x="799" y="870" width="4" height="1"/>
<rect class="fg" x="799" y="872" width="4" height="1"/>
<rect class="fg" x="799" y="874" width="4" height="1"/>
<rect class="fg" x="795" y="876" width="8" height="1"/>
<rect class="fg" x="799" y="878" width="4" height="1"/>
<rect class="fg" x="799" y="880" width="4" height="1"/>
<rect class="fg" x="799" y="881" width="4" height="1"/>
<rect class="fg" x="799" y="883" width="4" height="1"/>
<rect class="fg" x="799" y="885" width="4" height="1"/>
<rect class="fg" x="799" y="887" width="4" height="1"/>
<rect class="fg" x="799" y="889" width="4" height="1"/>
<rect class="fg" x="799" y="891" width="4" height="1"/>
<rect class="fg" x="799" y="892" width="4" height="1"/>
<rect class="fg" x="795" y="894" width="8" height="1"/>
<rect class="fg" x="799" y="896" width="4" height="1"/>
<rect class="fg" x="799" y="898" width="4" height="1"/>
<rect class="fg" x="799" y="900" width="4" height="1"/>
<rect class="fg" x="799" y="901" width="4" height="1"/>
<rect class="fg" x="799" y="903" width="4" height="1"/>
<rect class="fg" x="799" y="905" width="4" height="1"/>
<rect class="fg" x="799" y="907" width="4" height="1"/>
<rect class="fg" x="799" y="909" width="4" height="1"/>
<rect class="fg" x="799" y="911" width="4" height="1"/>
<rect class="fg" x="795" y="912" width="8" height="1"/>
<rect class="fg" x="799" y="914" width="4" height="1"/>
<rect class="fg" x="799" y="916" width="4" height="1"/>
<rect class="fg" x="799" y="918" width="4" height="1"/>
<rect class="fg" x="799" y="920" width="4" height="1"/>
<rect class="fg" x="799" y="922" width="4" height="1"/>
<rect class="fg" x="799" y="923" width="4" height="1"/>
<rect class="fg" x="799" y="925" width="4" height="1"/>
<rect class="fg" x="799" y="927" width="4" height="1"/>
<rect class="fg" x="799" y="929" width="4" height="1"/>
<rect class="fg" x="795" y="931" width="8" height="1"/>
<rect class="fg" x="799" y="932" width="4" height="1"/>
<rect class="fg" x="799" y="934" width="4" height="1"/>
<rect class="fg" x="799" y="936" width="4" height="1"/>
<rect class="fg" x="799" y="938" width="4" height="1"/>
<rect class="fg" x="799" y="940" width="4" height="1"/>
<rect class="fg" x="799" y="942" width="4" height="1"/>
<rect class="fg" x="799" y="943" width="4" height="1"/>
<rect class="fg" x="799" y="945" width="4" height="1"/>
<rect class="fg" x="799" y="947" width="4" height="1"/>
<rect class="fg" x="795" y="949" width="8" height="1"/>
<rect class="fg" x="804" y="951" width="1" height="8"/>
<rect class="fg" x="822" y="951" width="1" height="4"/>
<rect class="fg" x="841" y="951" width="1" height="8"/>
<rect class="fg" x="860" y="951" width="1" height="4"/>
<rect class="fg" x="878" y="951" width="1" height="8"/>
<rect class="fg" x="897" y="951" width="1" height="4"/>
<rect class="fg" x="916" y="951" width="1" height="8"/>
<rect class="fg" x="935" y="951" width="1" height="4"/>
<rect class="fg" x="953" y="951" width="1" height="8"/>
</g>
<text x="790.7" y="808.0" text-anchor="end" textLength="19.7">40.</text>
<text x="790.7" y="826.2" text-anchor="end" textLength="19.7">30.</text>
<text x="790.7" y="844.5" text-anchor="end" textLength="19.7">20.</text>
<text x="790.7" y="862.8" text-anchor="end" textLength="19.7">10.</text>
<text x="790.7" y="881.0" text-anchor="end" textLength="11.7">0.</text>
<text x="790.7" y="899.2" text-anchor="end" textLength="19.7">10.</text>
<text transform="translate(763.6 899.2) scale(1.6 1)">-</text>
<text x="790.7" y="917.5" text-anchor="end" textLength="19.7">20.</text>
<text transform="translate(763.6 917.5) scale(1.6 1)">-</text>
<text x="790.7" y="935.8" text-anchor="end" textLength="19.7">30.</text>
<text transform="translate(763.6 935.8) scale(1.6 1)">-</text>
<text x="790.7" y="954.0" text-anchor="end" textLength="19.7">40.</text>
<text transform="translate(763.6 954.0) scale(1.6 1)">-</text>
<text transform="translate(790.6 974) scale(1.6 1)">-</text>
<text x="798.0" y="974" textLength="19.7">40.</text>
<text transform="translate(828.0 974) scale(1.6 1)">-</text>
<text x="835.4" y="974" textLength="19.7">20.</text>
<text x="879.0" y="974" text-anchor="middle" textLength="11.7">0.</text>
<text x="916.4" y="974" text-anchor="middle" textLength="19.7">20.</text>
<text x="953.8" y="974" text-anchor="middle" textLength="19.7">40.</text>
<text x="879.0" y="992" text-anchor="middle">KSM-Y</text>
<text x="755" y="877" text-anchor="middle" transform="rotate(-90 755 877)">KSM-Z</text>
<g fill="none">
<ellipse cx="878.9" cy="876.3" rx="44.9" ry="44.3" stroke="#0000ff" stroke-width="1.25" stroke-dasharray="2.2 1.6"/>
<ellipse cx="880.4" cy="876.7" rx="38.4" ry="13.9" stroke="#000" stroke-width="1.5"/>
<circle cx="879" cy="876.7" r="1.9" stroke="#5a2d0c" stroke-width="1"/>
<path d="M822.5 840.2C825.1 843.0 834.2 852.9 838.0 857.0C841.8 861.1 842.2 862.2 845.0 865.0C847.8 867.8 851.7 871.2 855.0 874.0C858.3 876.8 861.7 879.3 865.0 882.0C868.3 884.7 871.8 887.8 875.0 890.0C878.2 892.2 881.2 893.7 884.0 895.0C886.8 896.3 890.7 897.2 892.0 897.7" stroke="#000" stroke-width="1.4"/>
<path d="M846.5 866.5 L853.5 873" stroke="#0000ff" stroke-width="4.5" stroke-linecap="round"/>
<path d="M841.5 861.5l8 8m0 -8l-8 8" stroke="#ff0000" stroke-width="1"/>
<circle cx="881.3" cy="890.5" r="2.7" fill="#ff0000"/>
</g>
</svg></body></html>
